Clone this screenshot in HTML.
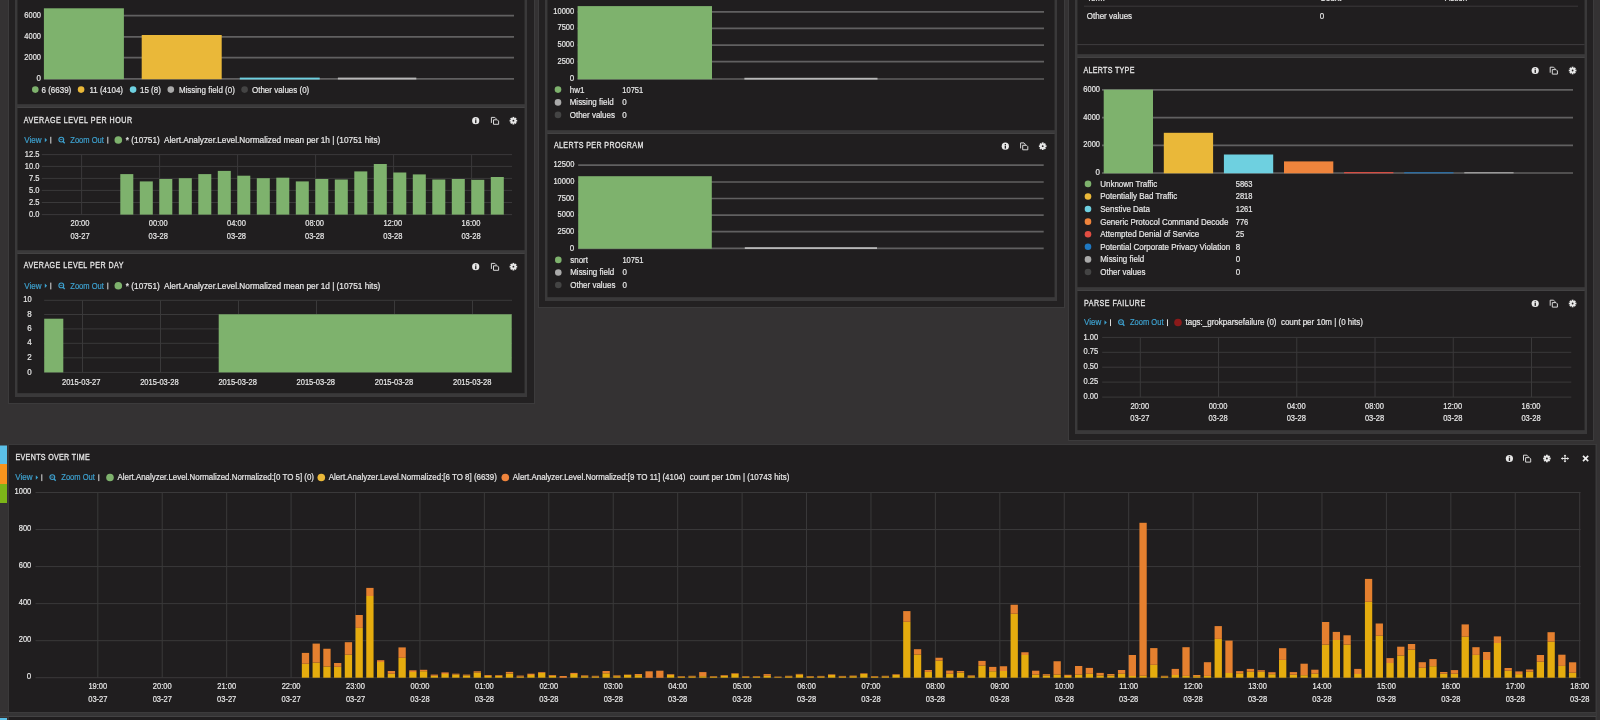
<!DOCTYPE html>
<html><head><meta charset="utf-8"><title>Kibana</title>
<style>
html,body{margin:0;padding:0;}
body{width:1600px;height:720px;overflow:hidden;background:#343233;position:relative;font-family:"Liberation Sans",sans-serif;}
svg{position:absolute;left:0;top:0;will-change:transform;}
svg text{font-family:"Liberation Sans",sans-serif;white-space:pre;}
</style></head><body>
<svg width="1600" height="720" viewBox="0 0 1600 720">
<rect x="8.00" y="-20.00" width="527.00" height="424.00" fill="#3c3b3c"/>
<rect x="9.00" y="-19.00" width="525.00" height="422.00" fill="#232122"/>
<rect x="15.00" y="-20.00" width="512.00" height="128.00" fill="#3a393a"/>
<rect x="17.50" y="-19.00" width="507.00" height="124.00" fill="#353435"/>
<rect x="17.50" y="-19.00" width="507.00" height="123.00" fill="#201e1f"/>
<line x1="17.50" y1="107.50" x2="524.50" y2="107.50" stroke="#3a393a" stroke-width="1"/>
<line x1="17.50" y1="-19.50" x2="524.50" y2="-19.50" stroke="#434243" stroke-width="1"/>
<rect x="15.00" y="107.00" width="512.00" height="147.00" fill="#3a393a"/>
<rect x="17.50" y="108.00" width="507.00" height="143.00" fill="#353435"/>
<rect x="17.50" y="108.00" width="507.00" height="142.00" fill="#201e1f"/>
<line x1="17.50" y1="253.50" x2="524.50" y2="253.50" stroke="#3a393a" stroke-width="1"/>
<line x1="17.50" y1="107.50" x2="524.50" y2="107.50" stroke="#434243" stroke-width="1"/>
<rect x="15.00" y="253.00" width="512.00" height="144.00" fill="#3a393a"/>
<rect x="17.50" y="254.00" width="507.00" height="140.00" fill="#353435"/>
<rect x="17.50" y="254.00" width="507.00" height="139.00" fill="#201e1f"/>
<line x1="17.50" y1="396.50" x2="524.50" y2="396.50" stroke="#3a393a" stroke-width="1"/>
<line x1="17.50" y1="253.50" x2="524.50" y2="253.50" stroke="#434243" stroke-width="1"/>
<rect x="538.00" y="-20.00" width="527.00" height="328.00" fill="#3c3b3c"/>
<rect x="539.00" y="-19.00" width="525.00" height="326.00" fill="#232122"/>
<rect x="545.00" y="-20.00" width="512.00" height="154.00" fill="#3a393a"/>
<rect x="547.50" y="-19.00" width="507.00" height="150.00" fill="#353435"/>
<rect x="547.50" y="-19.00" width="507.00" height="149.00" fill="#201e1f"/>
<line x1="547.50" y1="133.50" x2="1054.50" y2="133.50" stroke="#3a393a" stroke-width="1"/>
<line x1="547.50" y1="-19.50" x2="1054.50" y2="-19.50" stroke="#434243" stroke-width="1"/>
<rect x="545.00" y="133.00" width="512.00" height="168.00" fill="#3a393a"/>
<rect x="547.50" y="134.00" width="507.00" height="164.00" fill="#353435"/>
<rect x="547.50" y="134.00" width="507.00" height="163.00" fill="#201e1f"/>
<line x1="547.50" y1="300.50" x2="1054.50" y2="300.50" stroke="#3a393a" stroke-width="1"/>
<line x1="547.50" y1="133.50" x2="1054.50" y2="133.50" stroke="#434243" stroke-width="1"/>
<rect x="1068.00" y="-20.00" width="526.00" height="461.00" fill="#3c3b3c"/>
<rect x="1069.00" y="-19.00" width="524.00" height="459.00" fill="#232122"/>
<rect x="1075.00" y="-20.00" width="512.00" height="78.00" fill="#3a393a"/>
<rect x="1077.50" y="-19.00" width="507.00" height="74.00" fill="#353435"/>
<rect x="1077.50" y="-19.00" width="507.00" height="73.00" fill="#201e1f"/>
<line x1="1077.50" y1="57.50" x2="1584.50" y2="57.50" stroke="#3a393a" stroke-width="1"/>
<line x1="1077.50" y1="-19.50" x2="1584.50" y2="-19.50" stroke="#434243" stroke-width="1"/>
<rect x="1075.00" y="57.00" width="512.00" height="234.00" fill="#3a393a"/>
<rect x="1077.50" y="58.00" width="507.00" height="230.00" fill="#353435"/>
<rect x="1077.50" y="58.00" width="507.00" height="229.00" fill="#201e1f"/>
<line x1="1077.50" y1="290.50" x2="1584.50" y2="290.50" stroke="#3a393a" stroke-width="1"/>
<line x1="1077.50" y1="57.50" x2="1584.50" y2="57.50" stroke="#434243" stroke-width="1"/>
<rect x="1075.00" y="290.00" width="512.00" height="144.00" fill="#3a393a"/>
<rect x="1077.50" y="291.00" width="507.00" height="140.00" fill="#353435"/>
<rect x="1077.50" y="291.00" width="507.00" height="139.00" fill="#201e1f"/>
<line x1="1077.50" y1="433.50" x2="1584.50" y2="433.50" stroke="#3a393a" stroke-width="1"/>
<line x1="1077.50" y1="290.50" x2="1584.50" y2="290.50" stroke="#434243" stroke-width="1"/>
<rect x="8.00" y="444.00" width="1589.00" height="273.00" fill="#3a393a"/>
<rect x="9.00" y="445.00" width="1586.50" height="267.00" fill="#201e1f"/>
<rect x="0.00" y="712.00" width="1596.00" height="5.00" fill="#353435"/>
<line x1="0.00" y1="712.50" x2="1596.00" y2="712.50" stroke="#3c3b3c" stroke-width="1"/>
<line x1="0.00" y1="716.50" x2="1596.00" y2="716.50" stroke="#434243" stroke-width="1"/>
<rect x="8.00" y="717.00" width="1589.00" height="3.00" fill="#3a393a"/>
<rect x="9.00" y="717.00" width="1586.50" height="3.00" fill="#201e1f"/>
<rect x="0.00" y="718.00" width="7.00" height="2.00" fill="#5bc0e8"/>
<rect x="0.00" y="445.50" width="7.00" height="18.50" fill="#5bc0e8"/>
<rect x="0.00" y="464.00" width="7.00" height="20.00" fill="#f7941d"/>
<rect x="0.00" y="484.00" width="7.00" height="19.00" fill="#7cb518"/>
<text transform="translate(41.00,17.87) scale(1,1.14)" font-size="8" text-anchor="end" fill="#e8e8e8" stroke="#e8e8e8" stroke-width="0.18" font-weight="normal" textLength="16.72" lengthAdjust="spacingAndGlyphs">6000</text>
<text transform="translate(41.00,38.97) scale(1,1.14)" font-size="8" text-anchor="end" fill="#e8e8e8" stroke="#e8e8e8" stroke-width="0.18" font-weight="normal" textLength="16.72" lengthAdjust="spacingAndGlyphs">4000</text>
<text transform="translate(41.00,59.77) scale(1,1.14)" font-size="8" text-anchor="end" fill="#e8e8e8" stroke="#e8e8e8" stroke-width="0.18" font-weight="normal" textLength="16.72" lengthAdjust="spacingAndGlyphs">2000</text>
<text transform="translate(41.00,81.07) scale(1,1.14)" font-size="8" text-anchor="end" fill="#e8e8e8" stroke="#e8e8e8" stroke-width="0.18" font-weight="normal">0</text>
<line x1="44.00" y1="15.70" x2="514.00" y2="15.70" stroke="#616061" stroke-width="1.7"/>
<line x1="44.00" y1="36.80" x2="514.00" y2="36.80" stroke="#616061" stroke-width="1.7"/>
<line x1="44.00" y1="57.60" x2="514.00" y2="57.60" stroke="#616061" stroke-width="1.7"/>
<line x1="44.00" y1="78.90" x2="514.00" y2="78.90" stroke="#616061" stroke-width="1.7"/>
<rect x="43.90" y="8.30" width="80.00" height="70.90" fill="#7eb26d"/>
<rect x="141.70" y="35.00" width="80.00" height="44.20" fill="#eab839"/>
<rect x="239.80" y="77.60" width="79.90" height="1.90" fill="#6ed0e0"/>
<rect x="337.90" y="77.60" width="78.40" height="1.90" fill="#b8b8b8"/>
<circle cx="35.30" cy="89.60" r="3.3" fill="#7eb26d"/>
<text transform="translate(41.50,92.57) scale(1,1.14)" font-size="8" text-anchor="start" fill="#e8e8e8" stroke="#e8e8e8" stroke-width="0.18" font-weight="normal">6 (6639)</text>
<circle cx="81.10" cy="89.60" r="3.3" fill="#eab839"/>
<text transform="translate(89.40,92.57) scale(1,1.14)" font-size="8" text-anchor="start" fill="#e8e8e8" stroke="#e8e8e8" stroke-width="0.18" font-weight="normal">11 (4104)</text>
<circle cx="133.10" cy="89.60" r="3.3" fill="#6ed0e0"/>
<text transform="translate(140.00,92.57) scale(1,1.14)" font-size="8" text-anchor="start" fill="#e8e8e8" stroke="#e8e8e8" stroke-width="0.18" font-weight="normal">15 (8)</text>
<circle cx="170.80" cy="89.60" r="3.3" fill="#aaaaaa"/>
<text transform="translate(178.90,92.57) scale(1,1.14)" font-size="8" text-anchor="start" fill="#e8e8e8" stroke="#e8e8e8" stroke-width="0.18" font-weight="normal">Missing field (0)</text>
<circle cx="244.60" cy="89.60" r="3.3" fill="#444444"/>
<text transform="translate(252.00,92.57) scale(1,1.14)" font-size="8" text-anchor="start" fill="#e8e8e8" stroke="#e8e8e8" stroke-width="0.18" font-weight="normal">Other values (0)</text>
<text x="23.70" y="122.40" font-size="7.1" fill="#e6e6e6" stroke="#e6e6e6" stroke-width="0.25" textLength="108.4" lengthAdjust="spacing" transform="translate(0,-24.08) scale(1,1.2)">AVERAGE LEVEL PER HOUR</text>
<circle cx="475.70" cy="120.70" r="3.6" fill="#e8e8e8"/>
<rect x="475.10" y="118.50" width="1.3" height="1" fill="#211f20"/>
<rect x="475.10" y="120.10" width="1.3" height="3" fill="#211f20"/>
<path d="M491.40,122.90 V117.40 H494.80 L496.00,118.60 V119.50" fill="none" stroke="#d8d8d8" stroke-width="1"/>
<path d="M493.50,119.80 H497.30 L498.60,121.10 V124.30 H493.50 Z" fill="#211f20" stroke="#d8d8d8" stroke-width="1"/>
<g transform="translate(513.40,120.70)"><circle r="2.7" fill="#e8e8e8"/><rect x="-0.9" y="-3.8" width="1.8" height="2" fill="#e8e8e8" transform="rotate(0)"/><rect x="-0.9" y="-3.8" width="1.8" height="2" fill="#e8e8e8" transform="rotate(45)"/><rect x="-0.9" y="-3.8" width="1.8" height="2" fill="#e8e8e8" transform="rotate(90)"/><rect x="-0.9" y="-3.8" width="1.8" height="2" fill="#e8e8e8" transform="rotate(135)"/><rect x="-0.9" y="-3.8" width="1.8" height="2" fill="#e8e8e8" transform="rotate(180)"/><rect x="-0.9" y="-3.8" width="1.8" height="2" fill="#e8e8e8" transform="rotate(225)"/><rect x="-0.9" y="-3.8" width="1.8" height="2" fill="#e8e8e8" transform="rotate(270)"/><rect x="-0.9" y="-3.8" width="1.8" height="2" fill="#e8e8e8" transform="rotate(315)"/><circle r="0.9" fill="#211f20"/></g>
<text transform="translate(24.30,142.97) scale(1,1.14)" font-size="8" text-anchor="start" fill="#3ea2d0" stroke="#3ea2d0" stroke-width="0.18" font-weight="normal">View</text>
<path d="M44.80,137.80 L47.10,140.00 L44.80,142.20Z" fill="#3ea2d0"/>
<rect x="50.30" y="136.80" width="1.00" height="6.80" fill="#dddddd"/>
<circle cx="61.30" cy="139.60" r="2.4" fill="none" stroke="#3ea2d0" stroke-width="1.1"/>
<line x1="62.90" y1="141.30" x2="64.70" y2="143.20" stroke="#3ea2d0" stroke-width="1.3"/>
<line x1="60.10" y1="139.60" x2="62.50" y2="139.60" stroke="#3ea2d0" stroke-width="0.8"/>
<text transform="translate(70.30,142.97) scale(1,1.14)" font-size="8" text-anchor="start" fill="#3ea2d0" stroke="#3ea2d0" stroke-width="0.18" font-weight="normal" textLength="33.5" lengthAdjust="spacingAndGlyphs">Zoom Out</text>
<rect x="107.30" y="136.80" width="1.00" height="6.80" fill="#dddddd"/>
<circle cx="118.30" cy="140.00" r="3.8" fill="#7eb26d"/>
<text transform="translate(125.80,142.97) scale(1,1.14)" font-size="8" text-anchor="start" fill="#e8e8e8" stroke="#e8e8e8" stroke-width="0.18" font-weight="normal" textLength="254.5" lengthAdjust="spacingAndGlyphs">* (10751)  Alert.Analyzer.Level.Normalized mean per 1h | (10751 hits)</text>
<line x1="41.80" y1="154.60" x2="512.00" y2="154.60" stroke="#3a393a" stroke-width="1"/>
<text transform="translate(39.40,156.77) scale(1,1.14)" font-size="8" text-anchor="end" fill="#e8e8e8" stroke="#e8e8e8" stroke-width="0.18" font-weight="normal" textLength="14.63" lengthAdjust="spacingAndGlyphs">12.5</text>
<line x1="41.80" y1="166.40" x2="512.00" y2="166.40" stroke="#3a393a" stroke-width="1"/>
<text transform="translate(39.40,168.57) scale(1,1.14)" font-size="8" text-anchor="end" fill="#e8e8e8" stroke="#e8e8e8" stroke-width="0.18" font-weight="normal" textLength="14.63" lengthAdjust="spacingAndGlyphs">10.0</text>
<line x1="41.80" y1="178.40" x2="512.00" y2="178.40" stroke="#3a393a" stroke-width="1"/>
<text transform="translate(39.40,180.57) scale(1,1.14)" font-size="8" text-anchor="end" fill="#e8e8e8" stroke="#e8e8e8" stroke-width="0.18" font-weight="normal" textLength="10.45" lengthAdjust="spacingAndGlyphs">7.5</text>
<line x1="41.80" y1="190.40" x2="512.00" y2="190.40" stroke="#3a393a" stroke-width="1"/>
<text transform="translate(39.40,192.57) scale(1,1.14)" font-size="8" text-anchor="end" fill="#e8e8e8" stroke="#e8e8e8" stroke-width="0.18" font-weight="normal" textLength="10.45" lengthAdjust="spacingAndGlyphs">5.0</text>
<line x1="41.80" y1="202.50" x2="512.00" y2="202.50" stroke="#3a393a" stroke-width="1"/>
<text transform="translate(39.40,204.67) scale(1,1.14)" font-size="8" text-anchor="end" fill="#e8e8e8" stroke="#e8e8e8" stroke-width="0.18" font-weight="normal" textLength="10.45" lengthAdjust="spacingAndGlyphs">2.5</text>
<line x1="41.80" y1="214.60" x2="512.00" y2="214.60" stroke="#3a393a" stroke-width="1"/>
<text transform="translate(39.40,216.77) scale(1,1.14)" font-size="8" text-anchor="end" fill="#e8e8e8" stroke="#e8e8e8" stroke-width="0.18" font-weight="normal" textLength="10.45" lengthAdjust="spacingAndGlyphs">0.0</text>
<line x1="81.60" y1="154.60" x2="81.60" y2="214.60" stroke="#3a393a" stroke-width="1"/>
<line x1="159.60" y1="154.60" x2="159.60" y2="214.60" stroke="#3a393a" stroke-width="1"/>
<line x1="237.60" y1="154.60" x2="237.60" y2="214.60" stroke="#3a393a" stroke-width="1"/>
<line x1="315.60" y1="154.60" x2="315.60" y2="214.60" stroke="#3a393a" stroke-width="1"/>
<line x1="393.60" y1="154.60" x2="393.60" y2="214.60" stroke="#3a393a" stroke-width="1"/>
<line x1="471.60" y1="154.60" x2="471.60" y2="214.60" stroke="#3a393a" stroke-width="1"/>
<rect x="120.30" y="174.10" width="13.00" height="40.50" fill="#7eb26d"/>
<rect x="139.80" y="181.40" width="13.00" height="33.20" fill="#7eb26d"/>
<rect x="159.30" y="179.00" width="13.00" height="35.60" fill="#7eb26d"/>
<rect x="178.80" y="178.20" width="13.00" height="36.40" fill="#7eb26d"/>
<rect x="198.30" y="174.10" width="13.00" height="40.50" fill="#7eb26d"/>
<rect x="217.80" y="170.90" width="13.00" height="43.70" fill="#7eb26d"/>
<rect x="237.30" y="175.70" width="13.00" height="38.90" fill="#7eb26d"/>
<rect x="256.80" y="178.20" width="13.00" height="36.40" fill="#7eb26d"/>
<rect x="276.30" y="177.70" width="13.00" height="36.90" fill="#7eb26d"/>
<rect x="295.80" y="181.40" width="13.00" height="33.20" fill="#7eb26d"/>
<rect x="315.30" y="179.00" width="13.00" height="35.60" fill="#7eb26d"/>
<rect x="334.80" y="179.50" width="13.00" height="35.10" fill="#7eb26d"/>
<rect x="354.30" y="171.40" width="13.00" height="43.20" fill="#7eb26d"/>
<rect x="373.80" y="164.00" width="13.00" height="50.60" fill="#7eb26d"/>
<rect x="393.30" y="172.50" width="13.00" height="42.10" fill="#7eb26d"/>
<rect x="412.80" y="174.40" width="13.00" height="40.20" fill="#7eb26d"/>
<rect x="432.30" y="179.50" width="13.00" height="35.10" fill="#7eb26d"/>
<rect x="451.80" y="179.00" width="13.00" height="35.60" fill="#7eb26d"/>
<rect x="471.30" y="179.80" width="13.00" height="34.80" fill="#7eb26d"/>
<rect x="490.80" y="177.00" width="13.00" height="37.60" fill="#7eb26d"/>
<text transform="translate(80.00,226.17) scale(1,1.14)" font-size="8" text-anchor="middle" fill="#e8e8e8" stroke="#e8e8e8" stroke-width="0.18" font-weight="normal" textLength="18.82" lengthAdjust="spacingAndGlyphs">20:00</text>
<text transform="translate(80.00,238.87) scale(1,1.14)" font-size="8" text-anchor="middle" fill="#e8e8e8" stroke="#e8e8e8" stroke-width="0.18" font-weight="normal" textLength="19.23" lengthAdjust="spacingAndGlyphs">03-27</text>
<text transform="translate(158.20,226.17) scale(1,1.14)" font-size="8" text-anchor="middle" fill="#e8e8e8" stroke="#e8e8e8" stroke-width="0.18" font-weight="normal" textLength="18.82" lengthAdjust="spacingAndGlyphs">00:00</text>
<text transform="translate(158.20,238.87) scale(1,1.14)" font-size="8" text-anchor="middle" fill="#e8e8e8" stroke="#e8e8e8" stroke-width="0.18" font-weight="normal" textLength="19.23" lengthAdjust="spacingAndGlyphs">03-28</text>
<text transform="translate(236.40,226.17) scale(1,1.14)" font-size="8" text-anchor="middle" fill="#e8e8e8" stroke="#e8e8e8" stroke-width="0.18" font-weight="normal" textLength="18.82" lengthAdjust="spacingAndGlyphs">04:00</text>
<text transform="translate(236.40,238.87) scale(1,1.14)" font-size="8" text-anchor="middle" fill="#e8e8e8" stroke="#e8e8e8" stroke-width="0.18" font-weight="normal" textLength="19.23" lengthAdjust="spacingAndGlyphs">03-28</text>
<text transform="translate(314.60,226.17) scale(1,1.14)" font-size="8" text-anchor="middle" fill="#e8e8e8" stroke="#e8e8e8" stroke-width="0.18" font-weight="normal" textLength="18.82" lengthAdjust="spacingAndGlyphs">08:00</text>
<text transform="translate(314.60,238.87) scale(1,1.14)" font-size="8" text-anchor="middle" fill="#e8e8e8" stroke="#e8e8e8" stroke-width="0.18" font-weight="normal" textLength="19.23" lengthAdjust="spacingAndGlyphs">03-28</text>
<text transform="translate(392.80,226.17) scale(1,1.14)" font-size="8" text-anchor="middle" fill="#e8e8e8" stroke="#e8e8e8" stroke-width="0.18" font-weight="normal" textLength="18.82" lengthAdjust="spacingAndGlyphs">12:00</text>
<text transform="translate(392.80,238.87) scale(1,1.14)" font-size="8" text-anchor="middle" fill="#e8e8e8" stroke="#e8e8e8" stroke-width="0.18" font-weight="normal" textLength="19.23" lengthAdjust="spacingAndGlyphs">03-28</text>
<text transform="translate(471.00,226.17) scale(1,1.14)" font-size="8" text-anchor="middle" fill="#e8e8e8" stroke="#e8e8e8" stroke-width="0.18" font-weight="normal" textLength="18.82" lengthAdjust="spacingAndGlyphs">16:00</text>
<text transform="translate(471.00,238.87) scale(1,1.14)" font-size="8" text-anchor="middle" fill="#e8e8e8" stroke="#e8e8e8" stroke-width="0.18" font-weight="normal" textLength="19.23" lengthAdjust="spacingAndGlyphs">03-28</text>
<text x="23.70" y="267.90" font-size="7.1" fill="#e6e6e6" stroke="#e6e6e6" stroke-width="0.25" textLength="99.8" lengthAdjust="spacing" transform="translate(0,-53.18) scale(1,1.2)">AVERAGE LEVEL PER DAY</text>
<circle cx="475.70" cy="266.70" r="3.6" fill="#e8e8e8"/>
<rect x="475.10" y="264.50" width="1.3" height="1" fill="#211f20"/>
<rect x="475.10" y="266.10" width="1.3" height="3" fill="#211f20"/>
<path d="M491.40,268.90 V263.40 H494.80 L496.00,264.60 V265.50" fill="none" stroke="#d8d8d8" stroke-width="1"/>
<path d="M493.50,265.80 H497.30 L498.60,267.10 V270.30 H493.50 Z" fill="#211f20" stroke="#d8d8d8" stroke-width="1"/>
<g transform="translate(513.40,266.70)"><circle r="2.7" fill="#e8e8e8"/><rect x="-0.9" y="-3.8" width="1.8" height="2" fill="#e8e8e8" transform="rotate(0)"/><rect x="-0.9" y="-3.8" width="1.8" height="2" fill="#e8e8e8" transform="rotate(45)"/><rect x="-0.9" y="-3.8" width="1.8" height="2" fill="#e8e8e8" transform="rotate(90)"/><rect x="-0.9" y="-3.8" width="1.8" height="2" fill="#e8e8e8" transform="rotate(135)"/><rect x="-0.9" y="-3.8" width="1.8" height="2" fill="#e8e8e8" transform="rotate(180)"/><rect x="-0.9" y="-3.8" width="1.8" height="2" fill="#e8e8e8" transform="rotate(225)"/><rect x="-0.9" y="-3.8" width="1.8" height="2" fill="#e8e8e8" transform="rotate(270)"/><rect x="-0.9" y="-3.8" width="1.8" height="2" fill="#e8e8e8" transform="rotate(315)"/><circle r="0.9" fill="#211f20"/></g>
<text transform="translate(24.30,288.77) scale(1,1.14)" font-size="8" text-anchor="start" fill="#3ea2d0" stroke="#3ea2d0" stroke-width="0.18" font-weight="normal">View</text>
<path d="M44.80,283.60 L47.10,285.80 L44.80,288.00Z" fill="#3ea2d0"/>
<rect x="50.30" y="282.60" width="1.00" height="6.80" fill="#dddddd"/>
<circle cx="61.30" cy="285.40" r="2.4" fill="none" stroke="#3ea2d0" stroke-width="1.1"/>
<line x1="62.90" y1="287.10" x2="64.70" y2="289.00" stroke="#3ea2d0" stroke-width="1.3"/>
<line x1="60.10" y1="285.40" x2="62.50" y2="285.40" stroke="#3ea2d0" stroke-width="0.8"/>
<text transform="translate(70.30,288.77) scale(1,1.14)" font-size="8" text-anchor="start" fill="#3ea2d0" stroke="#3ea2d0" stroke-width="0.18" font-weight="normal" textLength="33.5" lengthAdjust="spacingAndGlyphs">Zoom Out</text>
<rect x="107.30" y="282.60" width="1.00" height="6.80" fill="#dddddd"/>
<circle cx="118.30" cy="285.80" r="3.8" fill="#7eb26d"/>
<text transform="translate(125.80,288.77) scale(1,1.14)" font-size="8" text-anchor="start" fill="#e8e8e8" stroke="#e8e8e8" stroke-width="0.18" font-weight="normal" textLength="254.5" lengthAdjust="spacingAndGlyphs">* (10751)  Alert.Analyzer.Level.Normalized mean per 1d | (10751 hits)</text>
<line x1="44.20" y1="300.30" x2="512.00" y2="300.30" stroke="#3a393a" stroke-width="1"/>
<text transform="translate(31.70,302.47) scale(1,1.14)" font-size="8" text-anchor="end" fill="#e8e8e8" stroke="#e8e8e8" stroke-width="0.18" font-weight="normal" textLength="8.36" lengthAdjust="spacingAndGlyphs">10</text>
<line x1="44.20" y1="314.50" x2="512.00" y2="314.50" stroke="#3a393a" stroke-width="1"/>
<text transform="translate(31.70,316.67) scale(1,1.14)" font-size="8" text-anchor="end" fill="#e8e8e8" stroke="#e8e8e8" stroke-width="0.18" font-weight="normal">8</text>
<line x1="44.20" y1="328.90" x2="512.00" y2="328.90" stroke="#3a393a" stroke-width="1"/>
<text transform="translate(31.70,331.07) scale(1,1.14)" font-size="8" text-anchor="end" fill="#e8e8e8" stroke="#e8e8e8" stroke-width="0.18" font-weight="normal">6</text>
<line x1="44.20" y1="343.30" x2="512.00" y2="343.30" stroke="#3a393a" stroke-width="1"/>
<text transform="translate(31.70,345.47) scale(1,1.14)" font-size="8" text-anchor="end" fill="#e8e8e8" stroke="#e8e8e8" stroke-width="0.18" font-weight="normal">4</text>
<line x1="44.20" y1="357.80" x2="512.00" y2="357.80" stroke="#3a393a" stroke-width="1"/>
<text transform="translate(31.70,359.97) scale(1,1.14)" font-size="8" text-anchor="end" fill="#e8e8e8" stroke="#e8e8e8" stroke-width="0.18" font-weight="normal">2</text>
<line x1="44.20" y1="372.40" x2="512.00" y2="372.40" stroke="#3a393a" stroke-width="1"/>
<text transform="translate(31.70,374.57) scale(1,1.14)" font-size="8" text-anchor="end" fill="#e8e8e8" stroke="#e8e8e8" stroke-width="0.18" font-weight="normal">0</text>
<line x1="82.50" y1="300.30" x2="82.50" y2="372.40" stroke="#3a393a" stroke-width="1"/>
<line x1="160.50" y1="300.30" x2="160.50" y2="372.40" stroke="#3a393a" stroke-width="1"/>
<line x1="238.50" y1="300.30" x2="238.50" y2="372.40" stroke="#3a393a" stroke-width="1"/>
<line x1="316.50" y1="300.30" x2="316.50" y2="372.40" stroke="#3a393a" stroke-width="1"/>
<line x1="394.50" y1="300.30" x2="394.50" y2="372.40" stroke="#3a393a" stroke-width="1"/>
<line x1="472.50" y1="300.30" x2="472.50" y2="372.40" stroke="#3a393a" stroke-width="1"/>
<rect x="44.20" y="318.70" width="19.10" height="53.70" fill="#7eb26d"/>
<rect x="218.70" y="314.30" width="293.00" height="58.10" fill="#7eb26d"/>
<text transform="translate(81.20,384.57) scale(1,1.14)" font-size="8" text-anchor="middle" fill="#e8e8e8" stroke="#e8e8e8" stroke-width="0.18" font-weight="normal" textLength="38.46" lengthAdjust="spacingAndGlyphs">2015-03-27</text>
<text transform="translate(159.40,384.57) scale(1,1.14)" font-size="8" text-anchor="middle" fill="#e8e8e8" stroke="#e8e8e8" stroke-width="0.18" font-weight="normal" textLength="38.46" lengthAdjust="spacingAndGlyphs">2015-03-28</text>
<text transform="translate(237.60,384.57) scale(1,1.14)" font-size="8" text-anchor="middle" fill="#e8e8e8" stroke="#e8e8e8" stroke-width="0.18" font-weight="normal" textLength="38.46" lengthAdjust="spacingAndGlyphs">2015-03-28</text>
<text transform="translate(315.80,384.57) scale(1,1.14)" font-size="8" text-anchor="middle" fill="#e8e8e8" stroke="#e8e8e8" stroke-width="0.18" font-weight="normal" textLength="38.46" lengthAdjust="spacingAndGlyphs">2015-03-28</text>
<text transform="translate(394.00,384.57) scale(1,1.14)" font-size="8" text-anchor="middle" fill="#e8e8e8" stroke="#e8e8e8" stroke-width="0.18" font-weight="normal" textLength="38.46" lengthAdjust="spacingAndGlyphs">2015-03-28</text>
<text transform="translate(472.20,384.57) scale(1,1.14)" font-size="8" text-anchor="middle" fill="#e8e8e8" stroke="#e8e8e8" stroke-width="0.18" font-weight="normal" textLength="38.46" lengthAdjust="spacingAndGlyphs">2015-03-28</text>
<text transform="translate(574.20,13.97) scale(1,1.14)" font-size="8" text-anchor="end" fill="#e8e8e8" stroke="#e8e8e8" stroke-width="0.18" font-weight="normal" textLength="20.91" lengthAdjust="spacingAndGlyphs">10000</text>
<line x1="577.60" y1="11.80" x2="1044.00" y2="11.80" stroke="#616061" stroke-width="1.7"/>
<text transform="translate(574.20,30.47) scale(1,1.14)" font-size="8" text-anchor="end" fill="#e8e8e8" stroke="#e8e8e8" stroke-width="0.18" font-weight="normal" textLength="16.72" lengthAdjust="spacingAndGlyphs">7500</text>
<line x1="577.60" y1="28.30" x2="1044.00" y2="28.30" stroke="#616061" stroke-width="1.7"/>
<text transform="translate(574.20,47.27) scale(1,1.14)" font-size="8" text-anchor="end" fill="#e8e8e8" stroke="#e8e8e8" stroke-width="0.18" font-weight="normal" textLength="16.72" lengthAdjust="spacingAndGlyphs">5000</text>
<line x1="577.60" y1="45.10" x2="1044.00" y2="45.10" stroke="#616061" stroke-width="1.7"/>
<text transform="translate(574.20,63.77) scale(1,1.14)" font-size="8" text-anchor="end" fill="#e8e8e8" stroke="#e8e8e8" stroke-width="0.18" font-weight="normal" textLength="16.72" lengthAdjust="spacingAndGlyphs">2500</text>
<line x1="577.60" y1="61.60" x2="1044.00" y2="61.60" stroke="#616061" stroke-width="1.7"/>
<text transform="translate(574.20,81.17) scale(1,1.14)" font-size="8" text-anchor="end" fill="#e8e8e8" stroke="#e8e8e8" stroke-width="0.18" font-weight="normal">0</text>
<line x1="577.60" y1="79.00" x2="1044.00" y2="79.00" stroke="#616061" stroke-width="1.7"/>
<rect x="577.60" y="6.10" width="134.40" height="73.20" fill="#7eb26d"/>
<rect x="744.40" y="77.80" width="133.10" height="1.80" fill="#b8b8b8"/>
<circle cx="558.00" cy="89.60" r="3.3" fill="#7eb26d"/>
<text transform="translate(569.70,92.57) scale(1,1.14)" font-size="8" text-anchor="start" fill="#e8e8e8" stroke="#e8e8e8" stroke-width="0.18" font-weight="normal">hw1</text>
<text transform="translate(622.30,92.57) scale(1,1.14)" font-size="8" text-anchor="start" fill="#e8e8e8" stroke="#e8e8e8" stroke-width="0.18" font-weight="normal" textLength="20.91" lengthAdjust="spacingAndGlyphs">10751</text>
<circle cx="558.00" cy="102.40" r="3.3" fill="#aaaaaa"/>
<text transform="translate(569.70,105.37) scale(1,1.14)" font-size="8" text-anchor="start" fill="#e8e8e8" stroke="#e8e8e8" stroke-width="0.18" font-weight="normal">Missing field</text>
<text transform="translate(622.30,105.37) scale(1,1.14)" font-size="8" text-anchor="start" fill="#e8e8e8" stroke="#e8e8e8" stroke-width="0.18" font-weight="normal">0</text>
<circle cx="558.00" cy="114.90" r="3.3" fill="#444444"/>
<text transform="translate(569.70,117.87) scale(1,1.14)" font-size="8" text-anchor="start" fill="#e8e8e8" stroke="#e8e8e8" stroke-width="0.18" font-weight="normal">Other values</text>
<text transform="translate(622.30,117.87) scale(1,1.14)" font-size="8" text-anchor="start" fill="#e8e8e8" stroke="#e8e8e8" stroke-width="0.18" font-weight="normal">0</text>
<text x="553.90" y="148.10" font-size="7.1" fill="#e6e6e6" stroke="#e6e6e6" stroke-width="0.25" textLength="89.5" lengthAdjust="spacing" transform="translate(0,-29.22) scale(1,1.2)">ALERTS PER PROGRAM</text>
<circle cx="1005.30" cy="146.20" r="3.6" fill="#e8e8e8"/>
<rect x="1004.70" y="144.00" width="1.3" height="1" fill="#211f20"/>
<rect x="1004.70" y="145.60" width="1.3" height="3" fill="#211f20"/>
<path d="M1020.60,148.40 V142.90 H1024.00 L1025.20,144.10 V145.00" fill="none" stroke="#d8d8d8" stroke-width="1"/>
<path d="M1022.70,145.30 H1026.50 L1027.80,146.60 V149.80 H1022.70 Z" fill="#211f20" stroke="#d8d8d8" stroke-width="1"/>
<g transform="translate(1042.70,146.20)"><circle r="2.7" fill="#e8e8e8"/><rect x="-0.9" y="-3.8" width="1.8" height="2" fill="#e8e8e8" transform="rotate(0)"/><rect x="-0.9" y="-3.8" width="1.8" height="2" fill="#e8e8e8" transform="rotate(45)"/><rect x="-0.9" y="-3.8" width="1.8" height="2" fill="#e8e8e8" transform="rotate(90)"/><rect x="-0.9" y="-3.8" width="1.8" height="2" fill="#e8e8e8" transform="rotate(135)"/><rect x="-0.9" y="-3.8" width="1.8" height="2" fill="#e8e8e8" transform="rotate(180)"/><rect x="-0.9" y="-3.8" width="1.8" height="2" fill="#e8e8e8" transform="rotate(225)"/><rect x="-0.9" y="-3.8" width="1.8" height="2" fill="#e8e8e8" transform="rotate(270)"/><rect x="-0.9" y="-3.8" width="1.8" height="2" fill="#e8e8e8" transform="rotate(315)"/><circle r="0.9" fill="#211f20"/></g>
<text transform="translate(574.30,167.37) scale(1,1.14)" font-size="8" text-anchor="end" fill="#e8e8e8" stroke="#e8e8e8" stroke-width="0.18" font-weight="normal" textLength="20.91" lengthAdjust="spacingAndGlyphs">12500</text>
<line x1="578.20" y1="165.20" x2="1043.70" y2="165.20" stroke="#616061" stroke-width="1.7"/>
<text transform="translate(574.30,184.17) scale(1,1.14)" font-size="8" text-anchor="end" fill="#e8e8e8" stroke="#e8e8e8" stroke-width="0.18" font-weight="normal" textLength="20.91" lengthAdjust="spacingAndGlyphs">10000</text>
<line x1="578.20" y1="182.00" x2="1043.70" y2="182.00" stroke="#616061" stroke-width="1.7"/>
<text transform="translate(574.30,200.67) scale(1,1.14)" font-size="8" text-anchor="end" fill="#e8e8e8" stroke="#e8e8e8" stroke-width="0.18" font-weight="normal" textLength="16.72" lengthAdjust="spacingAndGlyphs">7500</text>
<line x1="578.20" y1="198.50" x2="1043.70" y2="198.50" stroke="#616061" stroke-width="1.7"/>
<text transform="translate(574.30,217.37) scale(1,1.14)" font-size="8" text-anchor="end" fill="#e8e8e8" stroke="#e8e8e8" stroke-width="0.18" font-weight="normal" textLength="16.72" lengthAdjust="spacingAndGlyphs">5000</text>
<line x1="578.20" y1="215.20" x2="1043.70" y2="215.20" stroke="#616061" stroke-width="1.7"/>
<text transform="translate(574.30,233.87) scale(1,1.14)" font-size="8" text-anchor="end" fill="#e8e8e8" stroke="#e8e8e8" stroke-width="0.18" font-weight="normal" textLength="16.72" lengthAdjust="spacingAndGlyphs">2500</text>
<line x1="578.20" y1="231.70" x2="1043.70" y2="231.70" stroke="#616061" stroke-width="1.7"/>
<text transform="translate(574.30,250.57) scale(1,1.14)" font-size="8" text-anchor="end" fill="#e8e8e8" stroke="#e8e8e8" stroke-width="0.18" font-weight="normal">0</text>
<line x1="578.20" y1="248.40" x2="1043.70" y2="248.40" stroke="#616061" stroke-width="1.7"/>
<rect x="578.20" y="176.20" width="133.60" height="72.50" fill="#7eb26d"/>
<rect x="744.80" y="247.20" width="132.20" height="1.80" fill="#b8b8b8"/>
<circle cx="558.30" cy="259.90" r="3.3" fill="#7eb26d"/>
<text transform="translate(570.20,262.87) scale(1,1.14)" font-size="8" text-anchor="start" fill="#e8e8e8" stroke="#e8e8e8" stroke-width="0.18" font-weight="normal">snort</text>
<text transform="translate(622.40,262.87) scale(1,1.14)" font-size="8" text-anchor="start" fill="#e8e8e8" stroke="#e8e8e8" stroke-width="0.18" font-weight="normal" textLength="20.91" lengthAdjust="spacingAndGlyphs">10751</text>
<circle cx="558.30" cy="272.50" r="3.3" fill="#aaaaaa"/>
<text transform="translate(570.20,275.47) scale(1,1.14)" font-size="8" text-anchor="start" fill="#e8e8e8" stroke="#e8e8e8" stroke-width="0.18" font-weight="normal">Missing field</text>
<text transform="translate(622.40,275.47) scale(1,1.14)" font-size="8" text-anchor="start" fill="#e8e8e8" stroke="#e8e8e8" stroke-width="0.18" font-weight="normal">0</text>
<circle cx="558.30" cy="285.00" r="3.3" fill="#444444"/>
<text transform="translate(570.20,287.97) scale(1,1.14)" font-size="8" text-anchor="start" fill="#e8e8e8" stroke="#e8e8e8" stroke-width="0.18" font-weight="normal">Other values</text>
<text transform="translate(622.40,287.97) scale(1,1.14)" font-size="8" text-anchor="start" fill="#e8e8e8" stroke="#e8e8e8" stroke-width="0.18" font-weight="normal">0</text>
<text transform="translate(1087.00,1.47) scale(1,1.14)" font-size="8" text-anchor="start" fill="#e8e8e8" stroke="#e8e8e8" stroke-width="0.18" font-weight="normal">Term</text>
<text transform="translate(1320.00,1.47) scale(1,1.14)" font-size="8" text-anchor="start" fill="#e8e8e8" stroke="#e8e8e8" stroke-width="0.18" font-weight="normal">Count</text>
<text transform="translate(1445.00,1.47) scale(1,1.14)" font-size="8" text-anchor="start" fill="#e8e8e8" stroke="#e8e8e8" stroke-width="0.18" font-weight="normal">Action</text>
<line x1="1084.00" y1="6.20" x2="1578.00" y2="6.20" stroke="#3a393a" stroke-width="1"/>
<text transform="translate(1086.80,18.97) scale(1,1.14)" font-size="8" text-anchor="start" fill="#e8e8e8" stroke="#e8e8e8" stroke-width="0.18" font-weight="normal">Other values</text>
<text transform="translate(1319.70,18.97) scale(1,1.14)" font-size="8" text-anchor="start" fill="#e8e8e8" stroke="#e8e8e8" stroke-width="0.18" font-weight="normal">0</text>
<line x1="1077.00" y1="44.60" x2="1584.50" y2="44.60" stroke="#3e3d3e" stroke-width="1"/>
<text x="1083.40" y="72.30" font-size="7.1" fill="#e6e6e6" stroke="#e6e6e6" stroke-width="0.25" textLength="51" lengthAdjust="spacing" transform="translate(0,-14.06) scale(1,1.2)">ALERTS TYPE</text>
<circle cx="1535.20" cy="70.50" r="3.6" fill="#e8e8e8"/>
<rect x="1534.60" y="68.30" width="1.3" height="1" fill="#211f20"/>
<rect x="1534.60" y="69.90" width="1.3" height="3" fill="#211f20"/>
<path d="M1550.20,72.70 V67.20 H1553.60 L1554.80,68.40 V69.30" fill="none" stroke="#d8d8d8" stroke-width="1"/>
<path d="M1552.30,69.60 H1556.10 L1557.40,70.90 V74.10 H1552.30 Z" fill="#211f20" stroke="#d8d8d8" stroke-width="1"/>
<g transform="translate(1572.60,70.50)"><circle r="2.7" fill="#e8e8e8"/><rect x="-0.9" y="-3.8" width="1.8" height="2" fill="#e8e8e8" transform="rotate(0)"/><rect x="-0.9" y="-3.8" width="1.8" height="2" fill="#e8e8e8" transform="rotate(45)"/><rect x="-0.9" y="-3.8" width="1.8" height="2" fill="#e8e8e8" transform="rotate(90)"/><rect x="-0.9" y="-3.8" width="1.8" height="2" fill="#e8e8e8" transform="rotate(135)"/><rect x="-0.9" y="-3.8" width="1.8" height="2" fill="#e8e8e8" transform="rotate(180)"/><rect x="-0.9" y="-3.8" width="1.8" height="2" fill="#e8e8e8" transform="rotate(225)"/><rect x="-0.9" y="-3.8" width="1.8" height="2" fill="#e8e8e8" transform="rotate(270)"/><rect x="-0.9" y="-3.8" width="1.8" height="2" fill="#e8e8e8" transform="rotate(315)"/><circle r="0.9" fill="#211f20"/></g>
<text transform="translate(1100.00,92.07) scale(1,1.14)" font-size="8" text-anchor="end" fill="#e8e8e8" stroke="#e8e8e8" stroke-width="0.18" font-weight="normal" textLength="16.72" lengthAdjust="spacingAndGlyphs">6000</text>
<line x1="1102.00" y1="89.90" x2="1573.00" y2="89.90" stroke="#616061" stroke-width="1.7"/>
<text transform="translate(1100.00,119.77) scale(1,1.14)" font-size="8" text-anchor="end" fill="#e8e8e8" stroke="#e8e8e8" stroke-width="0.18" font-weight="normal" textLength="16.72" lengthAdjust="spacingAndGlyphs">4000</text>
<line x1="1102.00" y1="117.60" x2="1573.00" y2="117.60" stroke="#616061" stroke-width="1.7"/>
<text transform="translate(1100.00,147.47) scale(1,1.14)" font-size="8" text-anchor="end" fill="#e8e8e8" stroke="#e8e8e8" stroke-width="0.18" font-weight="normal" textLength="16.72" lengthAdjust="spacingAndGlyphs">2000</text>
<line x1="1102.00" y1="145.30" x2="1573.00" y2="145.30" stroke="#616061" stroke-width="1.7"/>
<text transform="translate(1100.00,175.17) scale(1,1.14)" font-size="8" text-anchor="end" fill="#e8e8e8" stroke="#e8e8e8" stroke-width="0.18" font-weight="normal">0</text>
<line x1="1102.00" y1="173.00" x2="1573.00" y2="173.00" stroke="#616061" stroke-width="1.7"/>
<rect x="1103.70" y="89.70" width="49.30" height="83.60" fill="#7eb26d"/>
<rect x="1163.80" y="132.80" width="49.30" height="40.50" fill="#eab839"/>
<rect x="1223.90" y="154.50" width="49.30" height="18.80" fill="#6ed0e0"/>
<rect x="1284.00" y="161.40" width="49.30" height="11.90" fill="#ef843c"/>
<rect x="1344.10" y="172.10" width="49.30" height="1.20" fill="#e24d42"/>
<rect x="1404.20" y="172.30" width="49.30" height="1.00" fill="#1f78c1"/>
<rect x="1464.30" y="172.30" width="49.30" height="1.00" fill="#b8b8b8"/>
<circle cx="1088.00" cy="183.90" r="3.3" fill="#7eb26d"/>
<text transform="translate(1100.20,186.87) scale(1,1.14)" font-size="8" text-anchor="start" fill="#e8e8e8" stroke="#e8e8e8" stroke-width="0.18" font-weight="normal">Unknown Traffic</text>
<text transform="translate(1235.70,186.87) scale(1,1.14)" font-size="8" text-anchor="start" fill="#e8e8e8" stroke="#e8e8e8" stroke-width="0.18" font-weight="normal" textLength="16.72" lengthAdjust="spacingAndGlyphs">5863</text>
<circle cx="1088.00" cy="196.48" r="3.3" fill="#eab839"/>
<text transform="translate(1100.20,199.45) scale(1,1.14)" font-size="8" text-anchor="start" fill="#e8e8e8" stroke="#e8e8e8" stroke-width="0.18" font-weight="normal">Potentially Bad Traffic</text>
<text transform="translate(1235.70,199.45) scale(1,1.14)" font-size="8" text-anchor="start" fill="#e8e8e8" stroke="#e8e8e8" stroke-width="0.18" font-weight="normal" textLength="16.72" lengthAdjust="spacingAndGlyphs">2818</text>
<circle cx="1088.00" cy="209.06" r="3.3" fill="#6ed0e0"/>
<text transform="translate(1100.20,212.03) scale(1,1.14)" font-size="8" text-anchor="start" fill="#e8e8e8" stroke="#e8e8e8" stroke-width="0.18" font-weight="normal">Senstive Data</text>
<text transform="translate(1235.70,212.03) scale(1,1.14)" font-size="8" text-anchor="start" fill="#e8e8e8" stroke="#e8e8e8" stroke-width="0.18" font-weight="normal" textLength="16.72" lengthAdjust="spacingAndGlyphs">1261</text>
<circle cx="1088.00" cy="221.64" r="3.3" fill="#ef843c"/>
<text transform="translate(1100.20,224.61) scale(1,1.14)" font-size="8" text-anchor="start" fill="#e8e8e8" stroke="#e8e8e8" stroke-width="0.18" font-weight="normal">Generic Protocol Command Decode</text>
<text transform="translate(1235.70,224.61) scale(1,1.14)" font-size="8" text-anchor="start" fill="#e8e8e8" stroke="#e8e8e8" stroke-width="0.18" font-weight="normal" textLength="12.54" lengthAdjust="spacingAndGlyphs">776</text>
<circle cx="1088.00" cy="234.22" r="3.3" fill="#e24d42"/>
<text transform="translate(1100.20,237.19) scale(1,1.14)" font-size="8" text-anchor="start" fill="#e8e8e8" stroke="#e8e8e8" stroke-width="0.18" font-weight="normal">Attempted Denial of Service</text>
<text transform="translate(1235.70,237.19) scale(1,1.14)" font-size="8" text-anchor="start" fill="#e8e8e8" stroke="#e8e8e8" stroke-width="0.18" font-weight="normal" textLength="8.36" lengthAdjust="spacingAndGlyphs">25</text>
<circle cx="1088.00" cy="246.80" r="3.3" fill="#1f78c1"/>
<text transform="translate(1100.20,249.77) scale(1,1.14)" font-size="8" text-anchor="start" fill="#e8e8e8" stroke="#e8e8e8" stroke-width="0.18" font-weight="normal">Potential Corporate Privacy Violation</text>
<text transform="translate(1235.70,249.77) scale(1,1.14)" font-size="8" text-anchor="start" fill="#e8e8e8" stroke="#e8e8e8" stroke-width="0.18" font-weight="normal">8</text>
<circle cx="1088.00" cy="259.38" r="3.3" fill="#aaaaaa"/>
<text transform="translate(1100.20,262.35) scale(1,1.14)" font-size="8" text-anchor="start" fill="#e8e8e8" stroke="#e8e8e8" stroke-width="0.18" font-weight="normal">Missing field</text>
<text transform="translate(1235.70,262.35) scale(1,1.14)" font-size="8" text-anchor="start" fill="#e8e8e8" stroke="#e8e8e8" stroke-width="0.18" font-weight="normal">0</text>
<circle cx="1088.00" cy="271.96" r="3.3" fill="#444444"/>
<text transform="translate(1100.20,274.93) scale(1,1.14)" font-size="8" text-anchor="start" fill="#e8e8e8" stroke="#e8e8e8" stroke-width="0.18" font-weight="normal">Other values</text>
<text transform="translate(1235.70,274.93) scale(1,1.14)" font-size="8" text-anchor="start" fill="#e8e8e8" stroke="#e8e8e8" stroke-width="0.18" font-weight="normal">0</text>
<text x="1084.00" y="305.20" font-size="7.1" fill="#e6e6e6" stroke="#e6e6e6" stroke-width="0.25" textLength="61.2" lengthAdjust="spacing" transform="translate(0,-60.64) scale(1,1.2)">PARSE FAILURE</text>
<circle cx="1535.20" cy="303.50" r="3.6" fill="#e8e8e8"/>
<rect x="1534.60" y="301.30" width="1.3" height="1" fill="#211f20"/>
<rect x="1534.60" y="302.90" width="1.3" height="3" fill="#211f20"/>
<path d="M1550.20,305.70 V300.20 H1553.60 L1554.80,301.40 V302.30" fill="none" stroke="#d8d8d8" stroke-width="1"/>
<path d="M1552.30,302.60 H1556.10 L1557.40,303.90 V307.10 H1552.30 Z" fill="#211f20" stroke="#d8d8d8" stroke-width="1"/>
<g transform="translate(1572.60,303.50)"><circle r="2.7" fill="#e8e8e8"/><rect x="-0.9" y="-3.8" width="1.8" height="2" fill="#e8e8e8" transform="rotate(0)"/><rect x="-0.9" y="-3.8" width="1.8" height="2" fill="#e8e8e8" transform="rotate(45)"/><rect x="-0.9" y="-3.8" width="1.8" height="2" fill="#e8e8e8" transform="rotate(90)"/><rect x="-0.9" y="-3.8" width="1.8" height="2" fill="#e8e8e8" transform="rotate(135)"/><rect x="-0.9" y="-3.8" width="1.8" height="2" fill="#e8e8e8" transform="rotate(180)"/><rect x="-0.9" y="-3.8" width="1.8" height="2" fill="#e8e8e8" transform="rotate(225)"/><rect x="-0.9" y="-3.8" width="1.8" height="2" fill="#e8e8e8" transform="rotate(270)"/><rect x="-0.9" y="-3.8" width="1.8" height="2" fill="#e8e8e8" transform="rotate(315)"/><circle r="0.9" fill="#211f20"/></g>
<text transform="translate(1084.00,325.47) scale(1,1.14)" font-size="8" text-anchor="start" fill="#3ea2d0" stroke="#3ea2d0" stroke-width="0.18" font-weight="normal">View</text>
<path d="M1104.50,320.30 L1106.80,322.50 L1104.50,324.70Z" fill="#3ea2d0"/>
<rect x="1110.00" y="319.30" width="1.00" height="6.80" fill="#dddddd"/>
<circle cx="1121.00" cy="322.10" r="2.4" fill="none" stroke="#3ea2d0" stroke-width="1.1"/>
<line x1="1122.60" y1="323.80" x2="1124.40" y2="325.70" stroke="#3ea2d0" stroke-width="1.3"/>
<line x1="1119.80" y1="322.10" x2="1122.20" y2="322.10" stroke="#3ea2d0" stroke-width="0.8"/>
<text transform="translate(1130.00,325.47) scale(1,1.14)" font-size="8" text-anchor="start" fill="#3ea2d0" stroke="#3ea2d0" stroke-width="0.18" font-weight="normal" textLength="33.5" lengthAdjust="spacingAndGlyphs">Zoom Out</text>
<rect x="1167.00" y="319.30" width="1.00" height="6.80" fill="#dddddd"/>
<circle cx="1178.00" cy="322.50" r="3.8" fill="#8b1a1a"/>
<text transform="translate(1185.50,325.47) scale(1,1.14)" font-size="8" text-anchor="start" fill="#e8e8e8" stroke="#e8e8e8" stroke-width="0.18" font-weight="normal">tags:_grokparsefailure (0)  count per 10m | (0 hits)</text>
<line x1="1102.20" y1="337.40" x2="1571.30" y2="337.40" stroke="#3a393a" stroke-width="1"/>
<text transform="translate(1098.10,339.57) scale(1,1.14)" font-size="8" text-anchor="end" fill="#e8e8e8" stroke="#e8e8e8" stroke-width="0.18" font-weight="normal" textLength="14.63" lengthAdjust="spacingAndGlyphs">1.00</text>
<line x1="1102.20" y1="352.30" x2="1571.30" y2="352.30" stroke="#3a393a" stroke-width="1"/>
<text transform="translate(1098.10,354.47) scale(1,1.14)" font-size="8" text-anchor="end" fill="#e8e8e8" stroke="#e8e8e8" stroke-width="0.18" font-weight="normal" textLength="14.63" lengthAdjust="spacingAndGlyphs">0.75</text>
<line x1="1102.20" y1="367.20" x2="1571.30" y2="367.20" stroke="#3a393a" stroke-width="1"/>
<text transform="translate(1098.10,369.37) scale(1,1.14)" font-size="8" text-anchor="end" fill="#e8e8e8" stroke="#e8e8e8" stroke-width="0.18" font-weight="normal" textLength="14.63" lengthAdjust="spacingAndGlyphs">0.50</text>
<line x1="1102.20" y1="382.10" x2="1571.30" y2="382.10" stroke="#3a393a" stroke-width="1"/>
<text transform="translate(1098.10,384.27) scale(1,1.14)" font-size="8" text-anchor="end" fill="#e8e8e8" stroke="#e8e8e8" stroke-width="0.18" font-weight="normal" textLength="14.63" lengthAdjust="spacingAndGlyphs">0.25</text>
<line x1="1102.20" y1="397.10" x2="1571.30" y2="397.10" stroke="#3a393a" stroke-width="1"/>
<text transform="translate(1098.10,399.27) scale(1,1.14)" font-size="8" text-anchor="end" fill="#e8e8e8" stroke="#e8e8e8" stroke-width="0.18" font-weight="normal" textLength="14.63" lengthAdjust="spacingAndGlyphs">0.00</text>
<line x1="1140.30" y1="337.40" x2="1140.30" y2="397.10" stroke="#3a393a" stroke-width="1"/>
<text transform="translate(1139.80,408.87) scale(1,1.14)" font-size="8" text-anchor="middle" fill="#e8e8e8" stroke="#e8e8e8" stroke-width="0.18" font-weight="normal" textLength="18.82" lengthAdjust="spacingAndGlyphs">20:00</text>
<text transform="translate(1139.80,421.37) scale(1,1.14)" font-size="8" text-anchor="middle" fill="#e8e8e8" stroke="#e8e8e8" stroke-width="0.18" font-weight="normal" textLength="19.23" lengthAdjust="spacingAndGlyphs">03-27</text>
<line x1="1218.54" y1="337.40" x2="1218.54" y2="397.10" stroke="#3a393a" stroke-width="1"/>
<text transform="translate(1218.04,408.87) scale(1,1.14)" font-size="8" text-anchor="middle" fill="#e8e8e8" stroke="#e8e8e8" stroke-width="0.18" font-weight="normal" textLength="18.82" lengthAdjust="spacingAndGlyphs">00:00</text>
<text transform="translate(1218.04,421.37) scale(1,1.14)" font-size="8" text-anchor="middle" fill="#e8e8e8" stroke="#e8e8e8" stroke-width="0.18" font-weight="normal" textLength="19.23" lengthAdjust="spacingAndGlyphs">03-28</text>
<line x1="1296.78" y1="337.40" x2="1296.78" y2="397.10" stroke="#3a393a" stroke-width="1"/>
<text transform="translate(1296.28,408.87) scale(1,1.14)" font-size="8" text-anchor="middle" fill="#e8e8e8" stroke="#e8e8e8" stroke-width="0.18" font-weight="normal" textLength="18.82" lengthAdjust="spacingAndGlyphs">04:00</text>
<text transform="translate(1296.28,421.37) scale(1,1.14)" font-size="8" text-anchor="middle" fill="#e8e8e8" stroke="#e8e8e8" stroke-width="0.18" font-weight="normal" textLength="19.23" lengthAdjust="spacingAndGlyphs">03-28</text>
<line x1="1375.02" y1="337.40" x2="1375.02" y2="397.10" stroke="#3a393a" stroke-width="1"/>
<text transform="translate(1374.52,408.87) scale(1,1.14)" font-size="8" text-anchor="middle" fill="#e8e8e8" stroke="#e8e8e8" stroke-width="0.18" font-weight="normal" textLength="18.82" lengthAdjust="spacingAndGlyphs">08:00</text>
<text transform="translate(1374.52,421.37) scale(1,1.14)" font-size="8" text-anchor="middle" fill="#e8e8e8" stroke="#e8e8e8" stroke-width="0.18" font-weight="normal" textLength="19.23" lengthAdjust="spacingAndGlyphs">03-28</text>
<line x1="1453.26" y1="337.40" x2="1453.26" y2="397.10" stroke="#3a393a" stroke-width="1"/>
<text transform="translate(1452.76,408.87) scale(1,1.14)" font-size="8" text-anchor="middle" fill="#e8e8e8" stroke="#e8e8e8" stroke-width="0.18" font-weight="normal" textLength="18.82" lengthAdjust="spacingAndGlyphs">12:00</text>
<text transform="translate(1452.76,421.37) scale(1,1.14)" font-size="8" text-anchor="middle" fill="#e8e8e8" stroke="#e8e8e8" stroke-width="0.18" font-weight="normal" textLength="19.23" lengthAdjust="spacingAndGlyphs">03-28</text>
<line x1="1531.50" y1="337.40" x2="1531.50" y2="397.10" stroke="#3a393a" stroke-width="1"/>
<text transform="translate(1531.00,408.87) scale(1,1.14)" font-size="8" text-anchor="middle" fill="#e8e8e8" stroke="#e8e8e8" stroke-width="0.18" font-weight="normal" textLength="18.82" lengthAdjust="spacingAndGlyphs">16:00</text>
<text transform="translate(1531.00,421.37) scale(1,1.14)" font-size="8" text-anchor="middle" fill="#e8e8e8" stroke="#e8e8e8" stroke-width="0.18" font-weight="normal" textLength="19.23" lengthAdjust="spacingAndGlyphs">03-28</text>
<text x="15.50" y="460.00" font-size="7.1" fill="#e6e6e6" stroke="#e6e6e6" stroke-width="0.25" textLength="74.2" lengthAdjust="spacing" transform="translate(0,-91.60) scale(1,1.2)">EVENTS OVER TIME</text>
<circle cx="1509.40" cy="458.50" r="3.6" fill="#e8e8e8"/>
<rect x="1508.80" y="456.30" width="1.3" height="1" fill="#211f20"/>
<rect x="1508.80" y="457.90" width="1.3" height="3" fill="#211f20"/>
<path d="M1523.50,460.70 V455.20 H1526.90 L1528.10,456.40 V457.30" fill="none" stroke="#d8d8d8" stroke-width="1"/>
<path d="M1525.60,457.60 H1529.40 L1530.70,458.90 V462.10 H1525.60 Z" fill="#211f20" stroke="#d8d8d8" stroke-width="1"/>
<g transform="translate(1546.90,458.50)"><circle r="2.7" fill="#e8e8e8"/><rect x="-0.9" y="-3.8" width="1.8" height="2" fill="#e8e8e8" transform="rotate(0)"/><rect x="-0.9" y="-3.8" width="1.8" height="2" fill="#e8e8e8" transform="rotate(45)"/><rect x="-0.9" y="-3.8" width="1.8" height="2" fill="#e8e8e8" transform="rotate(90)"/><rect x="-0.9" y="-3.8" width="1.8" height="2" fill="#e8e8e8" transform="rotate(135)"/><rect x="-0.9" y="-3.8" width="1.8" height="2" fill="#e8e8e8" transform="rotate(180)"/><rect x="-0.9" y="-3.8" width="1.8" height="2" fill="#e8e8e8" transform="rotate(225)"/><rect x="-0.9" y="-3.8" width="1.8" height="2" fill="#e8e8e8" transform="rotate(270)"/><rect x="-0.9" y="-3.8" width="1.8" height="2" fill="#e8e8e8" transform="rotate(315)"/><circle r="0.9" fill="#211f20"/></g>
<g transform="translate(1565.00,458.50)" stroke="#e8e8e8" stroke-width="1" fill="#e8e8e8"><line x1="-3.5" y1="0" x2="3.5" y2="0"/><line x1="0" y1="-3.5" x2="0" y2="3.5"/><path d="M-4,0 L-2.3,-1.4 V1.4Z M4,0 L2.3,-1.4 V1.4Z M0,-4 L-1.4,-2.3 H1.4Z M0,4 L-1.4,2.3 H1.4Z" stroke="none"/></g>
<g transform="translate(1585.60,458.50)" stroke="#f0f0f0" stroke-width="1.6"><line x1="-2.6" y1="-2.6" x2="2.6" y2="2.6"/><line x1="-2.6" y1="2.6" x2="2.6" y2="-2.6"/></g>
<text transform="translate(15.30,480.47) scale(1,1.14)" font-size="8" text-anchor="start" fill="#3ea2d0" stroke="#3ea2d0" stroke-width="0.18" font-weight="normal">View</text>
<path d="M35.80,475.30 L38.10,477.50 L35.80,479.70Z" fill="#3ea2d0"/>
<rect x="41.30" y="474.30" width="1.00" height="6.80" fill="#dddddd"/>
<circle cx="52.30" cy="477.10" r="2.4" fill="none" stroke="#3ea2d0" stroke-width="1.1"/>
<line x1="53.90" y1="478.80" x2="55.70" y2="480.70" stroke="#3ea2d0" stroke-width="1.3"/>
<line x1="51.10" y1="477.10" x2="53.50" y2="477.10" stroke="#3ea2d0" stroke-width="0.8"/>
<text transform="translate(61.30,480.47) scale(1,1.14)" font-size="8" text-anchor="start" fill="#3ea2d0" stroke="#3ea2d0" stroke-width="0.18" font-weight="normal" textLength="33.5" lengthAdjust="spacingAndGlyphs">Zoom Out</text>
<rect x="98.30" y="474.30" width="1.00" height="6.80" fill="#dddddd"/>
<circle cx="110.00" cy="477.50" r="3.8" fill="#7eb26d"/>
<text transform="translate(117.50,480.47) scale(1,1.14)" font-size="8" text-anchor="start" fill="#e8e8e8" stroke="#e8e8e8" stroke-width="0.18" font-weight="normal" textLength="196.5" lengthAdjust="spacingAndGlyphs">Alert.Analyzer.Level.Normalized.Normalized:[0 TO 5] (0)</text>
<circle cx="321.30" cy="477.50" r="3.8" fill="#eab839"/>
<text transform="translate(328.80,480.47) scale(1,1.14)" font-size="8" text-anchor="start" fill="#e8e8e8" stroke="#e8e8e8" stroke-width="0.18" font-weight="normal" textLength="168" lengthAdjust="spacingAndGlyphs">Alert.Analyzer.Level.Normalized:[6 TO 8] (6639)</text>
<circle cx="505.30" cy="477.50" r="3.8" fill="#ef843c"/>
<text transform="translate(512.80,480.47) scale(1,1.14)" font-size="8" text-anchor="start" fill="#e8e8e8" stroke="#e8e8e8" stroke-width="0.18" font-weight="normal" textLength="276.5" lengthAdjust="spacingAndGlyphs">Alert.Analyzer.Level.Normalized:[9 TO 11] (4104)  count per 10m | (10743 hits)</text>
<line x1="35.50" y1="492.50" x2="1580.60" y2="492.50" stroke="#3a393a" stroke-width="1"/>
<text transform="translate(31.30,494.17) scale(1,1.14)" font-size="8" text-anchor="end" fill="#e8e8e8" stroke="#e8e8e8" stroke-width="0.18" font-weight="normal" textLength="16.72" lengthAdjust="spacingAndGlyphs">1000</text>
<line x1="35.50" y1="529.54" x2="1580.60" y2="529.54" stroke="#3a393a" stroke-width="1"/>
<text transform="translate(31.30,531.21) scale(1,1.14)" font-size="8" text-anchor="end" fill="#e8e8e8" stroke="#e8e8e8" stroke-width="0.18" font-weight="normal" textLength="12.54" lengthAdjust="spacingAndGlyphs">800</text>
<line x1="35.50" y1="566.58" x2="1580.60" y2="566.58" stroke="#3a393a" stroke-width="1"/>
<text transform="translate(31.30,568.25) scale(1,1.14)" font-size="8" text-anchor="end" fill="#e8e8e8" stroke="#e8e8e8" stroke-width="0.18" font-weight="normal" textLength="12.54" lengthAdjust="spacingAndGlyphs">600</text>
<line x1="35.50" y1="603.62" x2="1580.60" y2="603.62" stroke="#3a393a" stroke-width="1"/>
<text transform="translate(31.30,605.29) scale(1,1.14)" font-size="8" text-anchor="end" fill="#e8e8e8" stroke="#e8e8e8" stroke-width="0.18" font-weight="normal" textLength="12.54" lengthAdjust="spacingAndGlyphs">400</text>
<line x1="35.50" y1="640.66" x2="1580.60" y2="640.66" stroke="#3a393a" stroke-width="1"/>
<text transform="translate(31.30,642.33) scale(1,1.14)" font-size="8" text-anchor="end" fill="#e8e8e8" stroke="#e8e8e8" stroke-width="0.18" font-weight="normal" textLength="12.54" lengthAdjust="spacingAndGlyphs">200</text>
<line x1="35.50" y1="677.70" x2="1580.60" y2="677.70" stroke="#3a393a" stroke-width="1"/>
<text transform="translate(31.30,679.37) scale(1,1.14)" font-size="8" text-anchor="end" fill="#e8e8e8" stroke="#e8e8e8" stroke-width="0.18" font-weight="normal">0</text>
<line x1="97.80" y1="492.50" x2="97.80" y2="677.70" stroke="#3a393a" stroke-width="1"/>
<text transform="translate(97.80,688.97) scale(1,1.14)" font-size="8" text-anchor="middle" fill="#e8e8e8" stroke="#e8e8e8" stroke-width="0.18" font-weight="normal" textLength="18.82" lengthAdjust="spacingAndGlyphs">19:00</text>
<text transform="translate(97.80,701.77) scale(1,1.14)" font-size="8" text-anchor="middle" fill="#e8e8e8" stroke="#e8e8e8" stroke-width="0.18" font-weight="normal" textLength="19.23" lengthAdjust="spacingAndGlyphs">03-27</text>
<line x1="162.23" y1="492.50" x2="162.23" y2="677.70" stroke="#3a393a" stroke-width="1"/>
<text transform="translate(162.23,688.97) scale(1,1.14)" font-size="8" text-anchor="middle" fill="#e8e8e8" stroke="#e8e8e8" stroke-width="0.18" font-weight="normal" textLength="18.82" lengthAdjust="spacingAndGlyphs">20:00</text>
<text transform="translate(162.23,701.77) scale(1,1.14)" font-size="8" text-anchor="middle" fill="#e8e8e8" stroke="#e8e8e8" stroke-width="0.18" font-weight="normal" textLength="19.23" lengthAdjust="spacingAndGlyphs">03-27</text>
<line x1="226.66" y1="492.50" x2="226.66" y2="677.70" stroke="#3a393a" stroke-width="1"/>
<text transform="translate(226.66,688.97) scale(1,1.14)" font-size="8" text-anchor="middle" fill="#e8e8e8" stroke="#e8e8e8" stroke-width="0.18" font-weight="normal" textLength="18.82" lengthAdjust="spacingAndGlyphs">21:00</text>
<text transform="translate(226.66,701.77) scale(1,1.14)" font-size="8" text-anchor="middle" fill="#e8e8e8" stroke="#e8e8e8" stroke-width="0.18" font-weight="normal" textLength="19.23" lengthAdjust="spacingAndGlyphs">03-27</text>
<line x1="291.09" y1="492.50" x2="291.09" y2="677.70" stroke="#3a393a" stroke-width="1"/>
<text transform="translate(291.09,688.97) scale(1,1.14)" font-size="8" text-anchor="middle" fill="#e8e8e8" stroke="#e8e8e8" stroke-width="0.18" font-weight="normal" textLength="18.82" lengthAdjust="spacingAndGlyphs">22:00</text>
<text transform="translate(291.09,701.77) scale(1,1.14)" font-size="8" text-anchor="middle" fill="#e8e8e8" stroke="#e8e8e8" stroke-width="0.18" font-weight="normal" textLength="19.23" lengthAdjust="spacingAndGlyphs">03-27</text>
<line x1="355.52" y1="492.50" x2="355.52" y2="677.70" stroke="#3a393a" stroke-width="1"/>
<text transform="translate(355.52,688.97) scale(1,1.14)" font-size="8" text-anchor="middle" fill="#e8e8e8" stroke="#e8e8e8" stroke-width="0.18" font-weight="normal" textLength="18.82" lengthAdjust="spacingAndGlyphs">23:00</text>
<text transform="translate(355.52,701.77) scale(1,1.14)" font-size="8" text-anchor="middle" fill="#e8e8e8" stroke="#e8e8e8" stroke-width="0.18" font-weight="normal" textLength="19.23" lengthAdjust="spacingAndGlyphs">03-27</text>
<line x1="419.95" y1="492.50" x2="419.95" y2="677.70" stroke="#3a393a" stroke-width="1"/>
<text transform="translate(419.95,688.97) scale(1,1.14)" font-size="8" text-anchor="middle" fill="#e8e8e8" stroke="#e8e8e8" stroke-width="0.18" font-weight="normal" textLength="18.82" lengthAdjust="spacingAndGlyphs">00:00</text>
<text transform="translate(419.95,701.77) scale(1,1.14)" font-size="8" text-anchor="middle" fill="#e8e8e8" stroke="#e8e8e8" stroke-width="0.18" font-weight="normal" textLength="19.23" lengthAdjust="spacingAndGlyphs">03-28</text>
<line x1="484.38" y1="492.50" x2="484.38" y2="677.70" stroke="#3a393a" stroke-width="1"/>
<text transform="translate(484.38,688.97) scale(1,1.14)" font-size="8" text-anchor="middle" fill="#e8e8e8" stroke="#e8e8e8" stroke-width="0.18" font-weight="normal" textLength="18.82" lengthAdjust="spacingAndGlyphs">01:00</text>
<text transform="translate(484.38,701.77) scale(1,1.14)" font-size="8" text-anchor="middle" fill="#e8e8e8" stroke="#e8e8e8" stroke-width="0.18" font-weight="normal" textLength="19.23" lengthAdjust="spacingAndGlyphs">03-28</text>
<line x1="548.81" y1="492.50" x2="548.81" y2="677.70" stroke="#3a393a" stroke-width="1"/>
<text transform="translate(548.81,688.97) scale(1,1.14)" font-size="8" text-anchor="middle" fill="#e8e8e8" stroke="#e8e8e8" stroke-width="0.18" font-weight="normal" textLength="18.82" lengthAdjust="spacingAndGlyphs">02:00</text>
<text transform="translate(548.81,701.77) scale(1,1.14)" font-size="8" text-anchor="middle" fill="#e8e8e8" stroke="#e8e8e8" stroke-width="0.18" font-weight="normal" textLength="19.23" lengthAdjust="spacingAndGlyphs">03-28</text>
<line x1="613.24" y1="492.50" x2="613.24" y2="677.70" stroke="#3a393a" stroke-width="1"/>
<text transform="translate(613.24,688.97) scale(1,1.14)" font-size="8" text-anchor="middle" fill="#e8e8e8" stroke="#e8e8e8" stroke-width="0.18" font-weight="normal" textLength="18.82" lengthAdjust="spacingAndGlyphs">03:00</text>
<text transform="translate(613.24,701.77) scale(1,1.14)" font-size="8" text-anchor="middle" fill="#e8e8e8" stroke="#e8e8e8" stroke-width="0.18" font-weight="normal" textLength="19.23" lengthAdjust="spacingAndGlyphs">03-28</text>
<line x1="677.67" y1="492.50" x2="677.67" y2="677.70" stroke="#3a393a" stroke-width="1"/>
<text transform="translate(677.67,688.97) scale(1,1.14)" font-size="8" text-anchor="middle" fill="#e8e8e8" stroke="#e8e8e8" stroke-width="0.18" font-weight="normal" textLength="18.82" lengthAdjust="spacingAndGlyphs">04:00</text>
<text transform="translate(677.67,701.77) scale(1,1.14)" font-size="8" text-anchor="middle" fill="#e8e8e8" stroke="#e8e8e8" stroke-width="0.18" font-weight="normal" textLength="19.23" lengthAdjust="spacingAndGlyphs">03-28</text>
<line x1="742.10" y1="492.50" x2="742.10" y2="677.70" stroke="#3a393a" stroke-width="1"/>
<text transform="translate(742.10,688.97) scale(1,1.14)" font-size="8" text-anchor="middle" fill="#e8e8e8" stroke="#e8e8e8" stroke-width="0.18" font-weight="normal" textLength="18.82" lengthAdjust="spacingAndGlyphs">05:00</text>
<text transform="translate(742.10,701.77) scale(1,1.14)" font-size="8" text-anchor="middle" fill="#e8e8e8" stroke="#e8e8e8" stroke-width="0.18" font-weight="normal" textLength="19.23" lengthAdjust="spacingAndGlyphs">03-28</text>
<line x1="806.53" y1="492.50" x2="806.53" y2="677.70" stroke="#3a393a" stroke-width="1"/>
<text transform="translate(806.53,688.97) scale(1,1.14)" font-size="8" text-anchor="middle" fill="#e8e8e8" stroke="#e8e8e8" stroke-width="0.18" font-weight="normal" textLength="18.82" lengthAdjust="spacingAndGlyphs">06:00</text>
<text transform="translate(806.53,701.77) scale(1,1.14)" font-size="8" text-anchor="middle" fill="#e8e8e8" stroke="#e8e8e8" stroke-width="0.18" font-weight="normal" textLength="19.23" lengthAdjust="spacingAndGlyphs">03-28</text>
<line x1="870.96" y1="492.50" x2="870.96" y2="677.70" stroke="#3a393a" stroke-width="1"/>
<text transform="translate(870.96,688.97) scale(1,1.14)" font-size="8" text-anchor="middle" fill="#e8e8e8" stroke="#e8e8e8" stroke-width="0.18" font-weight="normal" textLength="18.82" lengthAdjust="spacingAndGlyphs">07:00</text>
<text transform="translate(870.96,701.77) scale(1,1.14)" font-size="8" text-anchor="middle" fill="#e8e8e8" stroke="#e8e8e8" stroke-width="0.18" font-weight="normal" textLength="19.23" lengthAdjust="spacingAndGlyphs">03-28</text>
<line x1="935.39" y1="492.50" x2="935.39" y2="677.70" stroke="#3a393a" stroke-width="1"/>
<text transform="translate(935.39,688.97) scale(1,1.14)" font-size="8" text-anchor="middle" fill="#e8e8e8" stroke="#e8e8e8" stroke-width="0.18" font-weight="normal" textLength="18.82" lengthAdjust="spacingAndGlyphs">08:00</text>
<text transform="translate(935.39,701.77) scale(1,1.14)" font-size="8" text-anchor="middle" fill="#e8e8e8" stroke="#e8e8e8" stroke-width="0.18" font-weight="normal" textLength="19.23" lengthAdjust="spacingAndGlyphs">03-28</text>
<line x1="999.82" y1="492.50" x2="999.82" y2="677.70" stroke="#3a393a" stroke-width="1"/>
<text transform="translate(999.82,688.97) scale(1,1.14)" font-size="8" text-anchor="middle" fill="#e8e8e8" stroke="#e8e8e8" stroke-width="0.18" font-weight="normal" textLength="18.82" lengthAdjust="spacingAndGlyphs">09:00</text>
<text transform="translate(999.82,701.77) scale(1,1.14)" font-size="8" text-anchor="middle" fill="#e8e8e8" stroke="#e8e8e8" stroke-width="0.18" font-weight="normal" textLength="19.23" lengthAdjust="spacingAndGlyphs">03-28</text>
<line x1="1064.25" y1="492.50" x2="1064.25" y2="677.70" stroke="#3a393a" stroke-width="1"/>
<text transform="translate(1064.25,688.97) scale(1,1.14)" font-size="8" text-anchor="middle" fill="#e8e8e8" stroke="#e8e8e8" stroke-width="0.18" font-weight="normal" textLength="18.82" lengthAdjust="spacingAndGlyphs">10:00</text>
<text transform="translate(1064.25,701.77) scale(1,1.14)" font-size="8" text-anchor="middle" fill="#e8e8e8" stroke="#e8e8e8" stroke-width="0.18" font-weight="normal" textLength="19.23" lengthAdjust="spacingAndGlyphs">03-28</text>
<line x1="1128.68" y1="492.50" x2="1128.68" y2="677.70" stroke="#3a393a" stroke-width="1"/>
<text transform="translate(1128.68,688.97) scale(1,1.14)" font-size="8" text-anchor="middle" fill="#e8e8e8" stroke="#e8e8e8" stroke-width="0.18" font-weight="normal" textLength="18.82" lengthAdjust="spacingAndGlyphs">11:00</text>
<text transform="translate(1128.68,701.77) scale(1,1.14)" font-size="8" text-anchor="middle" fill="#e8e8e8" stroke="#e8e8e8" stroke-width="0.18" font-weight="normal" textLength="19.23" lengthAdjust="spacingAndGlyphs">03-28</text>
<line x1="1193.11" y1="492.50" x2="1193.11" y2="677.70" stroke="#3a393a" stroke-width="1"/>
<text transform="translate(1193.11,688.97) scale(1,1.14)" font-size="8" text-anchor="middle" fill="#e8e8e8" stroke="#e8e8e8" stroke-width="0.18" font-weight="normal" textLength="18.82" lengthAdjust="spacingAndGlyphs">12:00</text>
<text transform="translate(1193.11,701.77) scale(1,1.14)" font-size="8" text-anchor="middle" fill="#e8e8e8" stroke="#e8e8e8" stroke-width="0.18" font-weight="normal" textLength="19.23" lengthAdjust="spacingAndGlyphs">03-28</text>
<line x1="1257.54" y1="492.50" x2="1257.54" y2="677.70" stroke="#3a393a" stroke-width="1"/>
<text transform="translate(1257.54,688.97) scale(1,1.14)" font-size="8" text-anchor="middle" fill="#e8e8e8" stroke="#e8e8e8" stroke-width="0.18" font-weight="normal" textLength="18.82" lengthAdjust="spacingAndGlyphs">13:00</text>
<text transform="translate(1257.54,701.77) scale(1,1.14)" font-size="8" text-anchor="middle" fill="#e8e8e8" stroke="#e8e8e8" stroke-width="0.18" font-weight="normal" textLength="19.23" lengthAdjust="spacingAndGlyphs">03-28</text>
<line x1="1321.97" y1="492.50" x2="1321.97" y2="677.70" stroke="#3a393a" stroke-width="1"/>
<text transform="translate(1321.97,688.97) scale(1,1.14)" font-size="8" text-anchor="middle" fill="#e8e8e8" stroke="#e8e8e8" stroke-width="0.18" font-weight="normal" textLength="18.82" lengthAdjust="spacingAndGlyphs">14:00</text>
<text transform="translate(1321.97,701.77) scale(1,1.14)" font-size="8" text-anchor="middle" fill="#e8e8e8" stroke="#e8e8e8" stroke-width="0.18" font-weight="normal" textLength="19.23" lengthAdjust="spacingAndGlyphs">03-28</text>
<line x1="1386.40" y1="492.50" x2="1386.40" y2="677.70" stroke="#3a393a" stroke-width="1"/>
<text transform="translate(1386.40,688.97) scale(1,1.14)" font-size="8" text-anchor="middle" fill="#e8e8e8" stroke="#e8e8e8" stroke-width="0.18" font-weight="normal" textLength="18.82" lengthAdjust="spacingAndGlyphs">15:00</text>
<text transform="translate(1386.40,701.77) scale(1,1.14)" font-size="8" text-anchor="middle" fill="#e8e8e8" stroke="#e8e8e8" stroke-width="0.18" font-weight="normal" textLength="19.23" lengthAdjust="spacingAndGlyphs">03-28</text>
<line x1="1450.83" y1="492.50" x2="1450.83" y2="677.70" stroke="#3a393a" stroke-width="1"/>
<text transform="translate(1450.83,688.97) scale(1,1.14)" font-size="8" text-anchor="middle" fill="#e8e8e8" stroke="#e8e8e8" stroke-width="0.18" font-weight="normal" textLength="18.82" lengthAdjust="spacingAndGlyphs">16:00</text>
<text transform="translate(1450.83,701.77) scale(1,1.14)" font-size="8" text-anchor="middle" fill="#e8e8e8" stroke="#e8e8e8" stroke-width="0.18" font-weight="normal" textLength="19.23" lengthAdjust="spacingAndGlyphs">03-28</text>
<line x1="1515.26" y1="492.50" x2="1515.26" y2="677.70" stroke="#3a393a" stroke-width="1"/>
<text transform="translate(1515.26,688.97) scale(1,1.14)" font-size="8" text-anchor="middle" fill="#e8e8e8" stroke="#e8e8e8" stroke-width="0.18" font-weight="normal" textLength="18.82" lengthAdjust="spacingAndGlyphs">17:00</text>
<text transform="translate(1515.26,701.77) scale(1,1.14)" font-size="8" text-anchor="middle" fill="#e8e8e8" stroke="#e8e8e8" stroke-width="0.18" font-weight="normal" textLength="19.23" lengthAdjust="spacingAndGlyphs">03-28</text>
<line x1="1579.69" y1="492.50" x2="1579.69" y2="677.70" stroke="#3a393a" stroke-width="1"/>
<text transform="translate(1579.69,688.97) scale(1,1.14)" font-size="8" text-anchor="middle" fill="#e8e8e8" stroke="#e8e8e8" stroke-width="0.18" font-weight="normal" textLength="18.82" lengthAdjust="spacingAndGlyphs">18:00</text>
<text transform="translate(1579.69,701.77) scale(1,1.14)" font-size="8" text-anchor="middle" fill="#e8e8e8" stroke="#e8e8e8" stroke-width="0.18" font-weight="normal" textLength="19.23" lengthAdjust="spacingAndGlyphs">03-28</text>
<rect x="301.83" y="663.75" width="7.30" height="13.95" fill="#e5ac0e"/>
<rect x="301.83" y="652.90" width="7.30" height="10.85" fill="#e5802f"/>
<rect x="312.57" y="662.60" width="7.30" height="15.10" fill="#e5ac0e"/>
<rect x="312.57" y="643.60" width="7.30" height="19.00" fill="#e5802f"/>
<rect x="323.31" y="666.50" width="7.30" height="11.20" fill="#e5ac0e"/>
<rect x="323.31" y="648.75" width="7.30" height="17.75" fill="#e5802f"/>
<rect x="334.04" y="666.80" width="7.30" height="10.90" fill="#e5ac0e"/>
<rect x="334.04" y="663.00" width="7.30" height="3.80" fill="#e5802f"/>
<rect x="344.78" y="654.70" width="7.30" height="23.00" fill="#e5ac0e"/>
<rect x="344.78" y="642.20" width="7.30" height="12.50" fill="#e5802f"/>
<rect x="355.52" y="627.90" width="7.30" height="49.80" fill="#e5ac0e"/>
<rect x="355.52" y="615.00" width="7.30" height="12.90" fill="#e5802f"/>
<rect x="366.26" y="596.00" width="7.30" height="81.70" fill="#e5ac0e"/>
<rect x="366.26" y="587.90" width="7.30" height="8.10" fill="#e5802f"/>
<rect x="377.00" y="662.00" width="7.30" height="15.70" fill="#e5ac0e"/>
<rect x="377.00" y="660.20" width="7.30" height="1.80" fill="#e5802f"/>
<rect x="387.74" y="673.75" width="7.30" height="3.95" fill="#e5ac0e"/>
<rect x="387.74" y="671.00" width="7.30" height="2.75" fill="#e5802f"/>
<rect x="398.47" y="657.80" width="7.30" height="19.90" fill="#e5ac0e"/>
<rect x="398.47" y="647.40" width="7.30" height="10.40" fill="#e5802f"/>
<rect x="409.21" y="672.00" width="7.30" height="5.70" fill="#e5ac0e"/>
<rect x="409.21" y="670.30" width="7.30" height="1.70" fill="#e5802f"/>
<rect x="419.95" y="671.20" width="7.30" height="6.50" fill="#e5ac0e"/>
<rect x="419.95" y="669.80" width="7.30" height="1.40" fill="#e5802f"/>
<rect x="430.69" y="675.80" width="7.30" height="1.90" fill="#e5ac0e"/>
<rect x="430.69" y="674.60" width="7.30" height="1.20" fill="#e5802f"/>
<rect x="441.43" y="674.00" width="7.30" height="3.70" fill="#e5ac0e"/>
<rect x="441.43" y="672.40" width="7.30" height="1.60" fill="#e5802f"/>
<rect x="452.17" y="674.50" width="7.30" height="3.20" fill="#e5ac0e"/>
<rect x="452.17" y="673.70" width="7.30" height="0.80" fill="#e5802f"/>
<rect x="462.90" y="675.40" width="7.30" height="2.30" fill="#e5ac0e"/>
<rect x="462.90" y="674.60" width="7.30" height="0.80" fill="#e5802f"/>
<rect x="473.64" y="672.50" width="7.30" height="5.20" fill="#e5ac0e"/>
<rect x="473.64" y="671.30" width="7.30" height="1.20" fill="#e5802f"/>
<rect x="484.38" y="676.00" width="7.30" height="1.70" fill="#e5ac0e"/>
<rect x="484.38" y="675.10" width="7.30" height="0.90" fill="#e5802f"/>
<rect x="495.12" y="675.80" width="7.30" height="1.90" fill="#e5ac0e"/>
<rect x="495.12" y="675.10" width="7.30" height="0.70" fill="#e5802f"/>
<rect x="505.86" y="673.50" width="7.30" height="4.20" fill="#e5ac0e"/>
<rect x="505.86" y="671.90" width="7.30" height="1.60" fill="#e5802f"/>
<rect x="516.60" y="676.60" width="7.30" height="1.10" fill="#e5ac0e"/>
<rect x="516.60" y="675.60" width="7.30" height="1.00" fill="#e5802f"/>
<rect x="527.33" y="675.00" width="7.30" height="2.70" fill="#e5ac0e"/>
<rect x="527.33" y="673.70" width="7.30" height="1.30" fill="#e5802f"/>
<rect x="538.07" y="672.90" width="7.30" height="4.80" fill="#e5ac0e"/>
<rect x="538.07" y="672.10" width="7.30" height="0.80" fill="#e5802f"/>
<rect x="548.81" y="675.80" width="7.30" height="1.90" fill="#e5ac0e"/>
<rect x="548.81" y="675.00" width="7.30" height="0.80" fill="#e5802f"/>
<rect x="559.55" y="677.80" width="7.30" height="-0.10" fill="#e5ac0e"/>
<rect x="559.55" y="676.00" width="7.30" height="1.80" fill="#e5802f"/>
<rect x="570.29" y="674.00" width="7.30" height="3.70" fill="#e5ac0e"/>
<rect x="570.29" y="672.90" width="7.30" height="1.10" fill="#e5802f"/>
<rect x="581.02" y="676.20" width="7.30" height="1.50" fill="#e5ac0e"/>
<rect x="581.02" y="675.40" width="7.30" height="0.80" fill="#e5802f"/>
<rect x="591.76" y="676.50" width="7.30" height="1.20" fill="#e5ac0e"/>
<rect x="591.76" y="675.80" width="7.30" height="0.70" fill="#e5802f"/>
<rect x="602.50" y="673.30" width="7.30" height="4.40" fill="#e5ac0e"/>
<rect x="602.50" y="671.00" width="7.30" height="2.30" fill="#e5802f"/>
<rect x="613.24" y="676.20" width="7.30" height="1.50" fill="#e5ac0e"/>
<rect x="613.24" y="675.40" width="7.30" height="0.80" fill="#e5802f"/>
<rect x="623.98" y="675.00" width="7.30" height="2.70" fill="#e5ac0e"/>
<rect x="623.98" y="674.60" width="7.30" height="0.40" fill="#e5802f"/>
<rect x="634.72" y="675.10" width="7.30" height="2.60" fill="#e5ac0e"/>
<rect x="634.72" y="674.00" width="7.30" height="1.10" fill="#e5802f"/>
<rect x="645.46" y="677.80" width="7.30" height="-0.10" fill="#e5ac0e"/>
<rect x="645.46" y="671.30" width="7.30" height="6.50" fill="#e5802f"/>
<rect x="656.19" y="677.80" width="7.30" height="-0.10" fill="#e5ac0e"/>
<rect x="656.19" y="670.70" width="7.30" height="7.10" fill="#e5802f"/>
<rect x="666.93" y="674.80" width="7.30" height="2.90" fill="#e5ac0e"/>
<rect x="666.93" y="674.10" width="7.30" height="0.70" fill="#e5802f"/>
<rect x="677.67" y="676.80" width="7.30" height="0.90" fill="#e5ac0e"/>
<rect x="677.67" y="676.20" width="7.30" height="0.60" fill="#e5802f"/>
<rect x="688.41" y="676.50" width="7.30" height="1.20" fill="#e5ac0e"/>
<rect x="688.41" y="675.80" width="7.30" height="0.70" fill="#e5802f"/>
<rect x="699.15" y="676.20" width="7.30" height="1.50" fill="#e5ac0e"/>
<rect x="699.15" y="672.10" width="7.30" height="4.10" fill="#e5802f"/>
<rect x="709.88" y="676.80" width="7.30" height="0.90" fill="#e5ac0e"/>
<rect x="709.88" y="676.20" width="7.30" height="0.60" fill="#e5802f"/>
<rect x="720.62" y="675.80" width="7.30" height="1.90" fill="#e5ac0e"/>
<rect x="720.62" y="675.10" width="7.30" height="0.70" fill="#e5802f"/>
<rect x="731.36" y="673.80" width="7.30" height="3.90" fill="#e5ac0e"/>
<rect x="731.36" y="673.20" width="7.30" height="0.60" fill="#e5802f"/>
<rect x="742.10" y="676.80" width="7.30" height="0.90" fill="#e5ac0e"/>
<rect x="742.10" y="676.20" width="7.30" height="0.60" fill="#e5802f"/>
<rect x="752.84" y="676.80" width="7.30" height="0.90" fill="#e5ac0e"/>
<rect x="752.84" y="676.20" width="7.30" height="0.60" fill="#e5802f"/>
<rect x="763.58" y="675.80" width="7.30" height="1.90" fill="#e5ac0e"/>
<rect x="763.58" y="674.10" width="7.30" height="1.70" fill="#e5802f"/>
<rect x="774.32" y="677.10" width="7.30" height="0.60" fill="#e5ac0e"/>
<rect x="774.32" y="676.60" width="7.30" height="0.50" fill="#e5802f"/>
<rect x="785.05" y="676.40" width="7.30" height="1.30" fill="#e5ac0e"/>
<rect x="785.05" y="675.80" width="7.30" height="0.60" fill="#e5802f"/>
<rect x="795.79" y="674.50" width="7.30" height="3.20" fill="#e5ac0e"/>
<rect x="795.79" y="673.90" width="7.30" height="0.60" fill="#e5802f"/>
<rect x="806.53" y="676.70" width="7.30" height="1.00" fill="#e5ac0e"/>
<rect x="806.53" y="676.10" width="7.30" height="0.60" fill="#e5802f"/>
<rect x="817.27" y="676.50" width="7.30" height="1.20" fill="#e5ac0e"/>
<rect x="817.27" y="675.90" width="7.30" height="0.60" fill="#e5802f"/>
<rect x="828.01" y="675.00" width="7.30" height="2.70" fill="#e5ac0e"/>
<rect x="828.01" y="674.40" width="7.30" height="0.60" fill="#e5802f"/>
<rect x="838.75" y="676.50" width="7.30" height="1.20" fill="#e5ac0e"/>
<rect x="838.75" y="675.90" width="7.30" height="0.60" fill="#e5802f"/>
<rect x="849.48" y="676.20" width="7.30" height="1.50" fill="#e5ac0e"/>
<rect x="849.48" y="675.60" width="7.30" height="0.60" fill="#e5802f"/>
<rect x="860.22" y="673.90" width="7.30" height="3.80" fill="#e5ac0e"/>
<rect x="860.22" y="673.30" width="7.30" height="0.60" fill="#e5802f"/>
<rect x="870.96" y="676.70" width="7.30" height="1.00" fill="#e5ac0e"/>
<rect x="870.96" y="676.10" width="7.30" height="0.60" fill="#e5802f"/>
<rect x="881.70" y="676.40" width="7.30" height="1.30" fill="#e5ac0e"/>
<rect x="881.70" y="675.80" width="7.30" height="0.60" fill="#e5802f"/>
<rect x="892.44" y="674.80" width="7.30" height="2.90" fill="#e5ac0e"/>
<rect x="892.44" y="674.20" width="7.30" height="0.60" fill="#e5802f"/>
<rect x="903.18" y="621.80" width="7.30" height="55.90" fill="#e5ac0e"/>
<rect x="903.18" y="611.10" width="7.30" height="10.70" fill="#e5802f"/>
<rect x="913.91" y="654.50" width="7.30" height="23.20" fill="#e5ac0e"/>
<rect x="913.91" y="649.20" width="7.30" height="5.30" fill="#e5802f"/>
<rect x="924.65" y="671.90" width="7.30" height="5.80" fill="#e5ac0e"/>
<rect x="924.65" y="670.00" width="7.30" height="1.90" fill="#e5802f"/>
<rect x="935.39" y="660.60" width="7.30" height="17.10" fill="#e5ac0e"/>
<rect x="935.39" y="657.75" width="7.30" height="2.85" fill="#e5802f"/>
<rect x="946.13" y="673.75" width="7.30" height="3.95" fill="#e5ac0e"/>
<rect x="946.13" y="670.60" width="7.30" height="3.15" fill="#e5802f"/>
<rect x="956.87" y="672.50" width="7.30" height="5.20" fill="#e5ac0e"/>
<rect x="956.87" y="671.00" width="7.30" height="1.50" fill="#e5802f"/>
<rect x="967.61" y="676.20" width="7.30" height="1.50" fill="#e5ac0e"/>
<rect x="967.61" y="675.40" width="7.30" height="0.80" fill="#e5802f"/>
<rect x="978.34" y="665.60" width="7.30" height="12.10" fill="#e5ac0e"/>
<rect x="978.34" y="660.90" width="7.30" height="4.70" fill="#e5802f"/>
<rect x="989.08" y="671.25" width="7.30" height="6.45" fill="#e5ac0e"/>
<rect x="989.08" y="666.90" width="7.30" height="4.35" fill="#e5802f"/>
<rect x="999.82" y="671.00" width="7.30" height="6.70" fill="#e5ac0e"/>
<rect x="999.82" y="666.25" width="7.30" height="4.75" fill="#e5802f"/>
<rect x="1010.56" y="613.75" width="7.30" height="63.95" fill="#e5ac0e"/>
<rect x="1010.56" y="604.75" width="7.30" height="9.00" fill="#e5802f"/>
<rect x="1021.30" y="655.00" width="7.30" height="22.70" fill="#e5ac0e"/>
<rect x="1021.30" y="652.25" width="7.30" height="2.75" fill="#e5802f"/>
<rect x="1032.04" y="674.60" width="7.30" height="3.10" fill="#e5ac0e"/>
<rect x="1032.04" y="670.70" width="7.30" height="3.90" fill="#e5802f"/>
<rect x="1042.77" y="675.50" width="7.30" height="2.20" fill="#e5ac0e"/>
<rect x="1042.77" y="674.20" width="7.30" height="1.30" fill="#e5802f"/>
<rect x="1053.51" y="674.60" width="7.30" height="3.10" fill="#e5ac0e"/>
<rect x="1053.51" y="661.25" width="7.30" height="13.35" fill="#e5802f"/>
<rect x="1064.25" y="676.00" width="7.30" height="1.70" fill="#e5ac0e"/>
<rect x="1064.25" y="674.80" width="7.30" height="1.20" fill="#e5802f"/>
<rect x="1074.99" y="674.60" width="7.30" height="3.10" fill="#e5ac0e"/>
<rect x="1074.99" y="666.00" width="7.30" height="8.60" fill="#e5802f"/>
<rect x="1085.73" y="673.75" width="7.30" height="3.95" fill="#e5ac0e"/>
<rect x="1085.73" y="667.90" width="7.30" height="5.85" fill="#e5802f"/>
<rect x="1096.47" y="675.40" width="7.30" height="2.30" fill="#e5ac0e"/>
<rect x="1096.47" y="672.90" width="7.30" height="2.50" fill="#e5802f"/>
<rect x="1107.20" y="675.40" width="7.30" height="2.30" fill="#e5ac0e"/>
<rect x="1107.20" y="674.00" width="7.30" height="1.40" fill="#e5802f"/>
<rect x="1117.94" y="673.75" width="7.30" height="3.95" fill="#e5ac0e"/>
<rect x="1117.94" y="670.00" width="7.30" height="3.75" fill="#e5802f"/>
<rect x="1128.68" y="676.00" width="7.30" height="1.70" fill="#e5ac0e"/>
<rect x="1128.68" y="655.00" width="7.30" height="21.00" fill="#e5802f"/>
<rect x="1139.42" y="675.80" width="7.30" height="1.90" fill="#e5ac0e"/>
<rect x="1139.42" y="522.80" width="7.30" height="153.00" fill="#e5802f"/>
<rect x="1150.16" y="664.80" width="7.30" height="12.90" fill="#e5ac0e"/>
<rect x="1150.16" y="648.10" width="7.30" height="16.70" fill="#e5802f"/>
<rect x="1160.89" y="676.50" width="7.30" height="1.20" fill="#e5ac0e"/>
<rect x="1160.89" y="675.80" width="7.30" height="0.70" fill="#e5802f"/>
<rect x="1171.63" y="675.00" width="7.30" height="2.70" fill="#e5ac0e"/>
<rect x="1171.63" y="668.90" width="7.30" height="6.10" fill="#e5802f"/>
<rect x="1182.37" y="675.90" width="7.30" height="1.80" fill="#e5ac0e"/>
<rect x="1182.37" y="647.20" width="7.30" height="28.70" fill="#e5802f"/>
<rect x="1193.11" y="676.20" width="7.30" height="1.50" fill="#e5ac0e"/>
<rect x="1193.11" y="675.00" width="7.30" height="1.20" fill="#e5802f"/>
<rect x="1203.85" y="675.90" width="7.30" height="1.80" fill="#e5ac0e"/>
<rect x="1203.85" y="662.20" width="7.30" height="13.70" fill="#e5802f"/>
<rect x="1214.59" y="638.90" width="7.30" height="38.80" fill="#e5ac0e"/>
<rect x="1214.59" y="626.10" width="7.30" height="12.80" fill="#e5802f"/>
<rect x="1225.33" y="673.00" width="7.30" height="4.70" fill="#e5ac0e"/>
<rect x="1225.33" y="640.60" width="7.30" height="32.40" fill="#e5802f"/>
<rect x="1236.06" y="673.30" width="7.30" height="4.40" fill="#e5ac0e"/>
<rect x="1236.06" y="671.10" width="7.30" height="2.20" fill="#e5802f"/>
<rect x="1246.80" y="671.70" width="7.30" height="6.00" fill="#e5ac0e"/>
<rect x="1246.80" y="668.90" width="7.30" height="2.80" fill="#e5802f"/>
<rect x="1257.54" y="671.70" width="7.30" height="6.00" fill="#e5ac0e"/>
<rect x="1257.54" y="670.20" width="7.30" height="1.50" fill="#e5802f"/>
<rect x="1268.28" y="674.20" width="7.30" height="3.50" fill="#e5ac0e"/>
<rect x="1268.28" y="672.20" width="7.30" height="2.00" fill="#e5802f"/>
<rect x="1279.02" y="659.90" width="7.30" height="17.80" fill="#e5ac0e"/>
<rect x="1279.02" y="648.20" width="7.30" height="11.70" fill="#e5802f"/>
<rect x="1289.76" y="674.70" width="7.30" height="3.00" fill="#e5ac0e"/>
<rect x="1289.76" y="672.10" width="7.30" height="2.60" fill="#e5802f"/>
<rect x="1300.49" y="675.20" width="7.30" height="2.50" fill="#e5ac0e"/>
<rect x="1300.49" y="663.70" width="7.30" height="11.50" fill="#e5802f"/>
<rect x="1311.23" y="673.70" width="7.30" height="4.00" fill="#e5ac0e"/>
<rect x="1311.23" y="669.70" width="7.30" height="4.00" fill="#e5802f"/>
<rect x="1321.97" y="644.60" width="7.30" height="33.10" fill="#e5ac0e"/>
<rect x="1321.97" y="622.00" width="7.30" height="22.60" fill="#e5802f"/>
<rect x="1332.71" y="640.00" width="7.30" height="37.70" fill="#e5ac0e"/>
<rect x="1332.71" y="631.90" width="7.30" height="8.10" fill="#e5802f"/>
<rect x="1343.45" y="644.60" width="7.30" height="33.10" fill="#e5ac0e"/>
<rect x="1343.45" y="635.30" width="7.30" height="9.30" fill="#e5802f"/>
<rect x="1354.19" y="674.00" width="7.30" height="3.70" fill="#e5ac0e"/>
<rect x="1354.19" y="668.90" width="7.30" height="5.10" fill="#e5802f"/>
<rect x="1364.92" y="601.80" width="7.30" height="75.90" fill="#e5ac0e"/>
<rect x="1364.92" y="578.90" width="7.30" height="22.90" fill="#e5802f"/>
<rect x="1375.66" y="635.75" width="7.30" height="41.95" fill="#e5ac0e"/>
<rect x="1375.66" y="623.50" width="7.30" height="12.25" fill="#e5802f"/>
<rect x="1386.40" y="663.00" width="7.30" height="14.70" fill="#e5ac0e"/>
<rect x="1386.40" y="658.10" width="7.30" height="4.90" fill="#e5802f"/>
<rect x="1397.14" y="655.50" width="7.30" height="22.20" fill="#e5ac0e"/>
<rect x="1397.14" y="646.70" width="7.30" height="8.80" fill="#e5802f"/>
<rect x="1407.88" y="649.60" width="7.30" height="28.10" fill="#e5ac0e"/>
<rect x="1407.88" y="644.00" width="7.30" height="5.60" fill="#e5802f"/>
<rect x="1418.62" y="667.80" width="7.30" height="9.90" fill="#e5ac0e"/>
<rect x="1418.62" y="662.20" width="7.30" height="5.60" fill="#e5802f"/>
<rect x="1429.35" y="666.20" width="7.30" height="11.50" fill="#e5ac0e"/>
<rect x="1429.35" y="659.10" width="7.30" height="7.10" fill="#e5802f"/>
<rect x="1440.09" y="673.70" width="7.30" height="4.00" fill="#e5ac0e"/>
<rect x="1440.09" y="672.00" width="7.30" height="1.70" fill="#e5802f"/>
<rect x="1450.83" y="673.70" width="7.30" height="4.00" fill="#e5ac0e"/>
<rect x="1450.83" y="670.10" width="7.30" height="3.60" fill="#e5802f"/>
<rect x="1461.57" y="636.70" width="7.30" height="41.00" fill="#e5ac0e"/>
<rect x="1461.57" y="624.40" width="7.30" height="12.30" fill="#e5802f"/>
<rect x="1472.31" y="654.90" width="7.30" height="22.80" fill="#e5ac0e"/>
<rect x="1472.31" y="647.20" width="7.30" height="7.70" fill="#e5802f"/>
<rect x="1483.05" y="660.00" width="7.30" height="17.70" fill="#e5ac0e"/>
<rect x="1483.05" y="652.00" width="7.30" height="8.00" fill="#e5802f"/>
<rect x="1493.78" y="643.00" width="7.30" height="34.70" fill="#e5ac0e"/>
<rect x="1493.78" y="636.40" width="7.30" height="6.60" fill="#e5802f"/>
<rect x="1504.52" y="670.70" width="7.30" height="7.00" fill="#e5ac0e"/>
<rect x="1504.52" y="668.00" width="7.30" height="2.70" fill="#e5802f"/>
<rect x="1515.26" y="674.10" width="7.30" height="3.60" fill="#e5ac0e"/>
<rect x="1515.26" y="671.40" width="7.30" height="2.70" fill="#e5802f"/>
<rect x="1526.00" y="671.70" width="7.30" height="6.00" fill="#e5ac0e"/>
<rect x="1526.00" y="669.50" width="7.30" height="2.20" fill="#e5802f"/>
<rect x="1536.74" y="661.70" width="7.30" height="16.00" fill="#e5ac0e"/>
<rect x="1536.74" y="655.00" width="7.30" height="6.70" fill="#e5802f"/>
<rect x="1547.48" y="641.60" width="7.30" height="36.10" fill="#e5ac0e"/>
<rect x="1547.48" y="632.20" width="7.30" height="9.40" fill="#e5802f"/>
<rect x="1558.21" y="665.90" width="7.30" height="11.80" fill="#e5ac0e"/>
<rect x="1558.21" y="654.70" width="7.30" height="11.20" fill="#e5802f"/>
<rect x="1568.95" y="672.70" width="7.30" height="5.00" fill="#e5ac0e"/>
<rect x="1568.95" y="662.30" width="7.30" height="10.40" fill="#e5802f"/>
</svg>
</body></html>
